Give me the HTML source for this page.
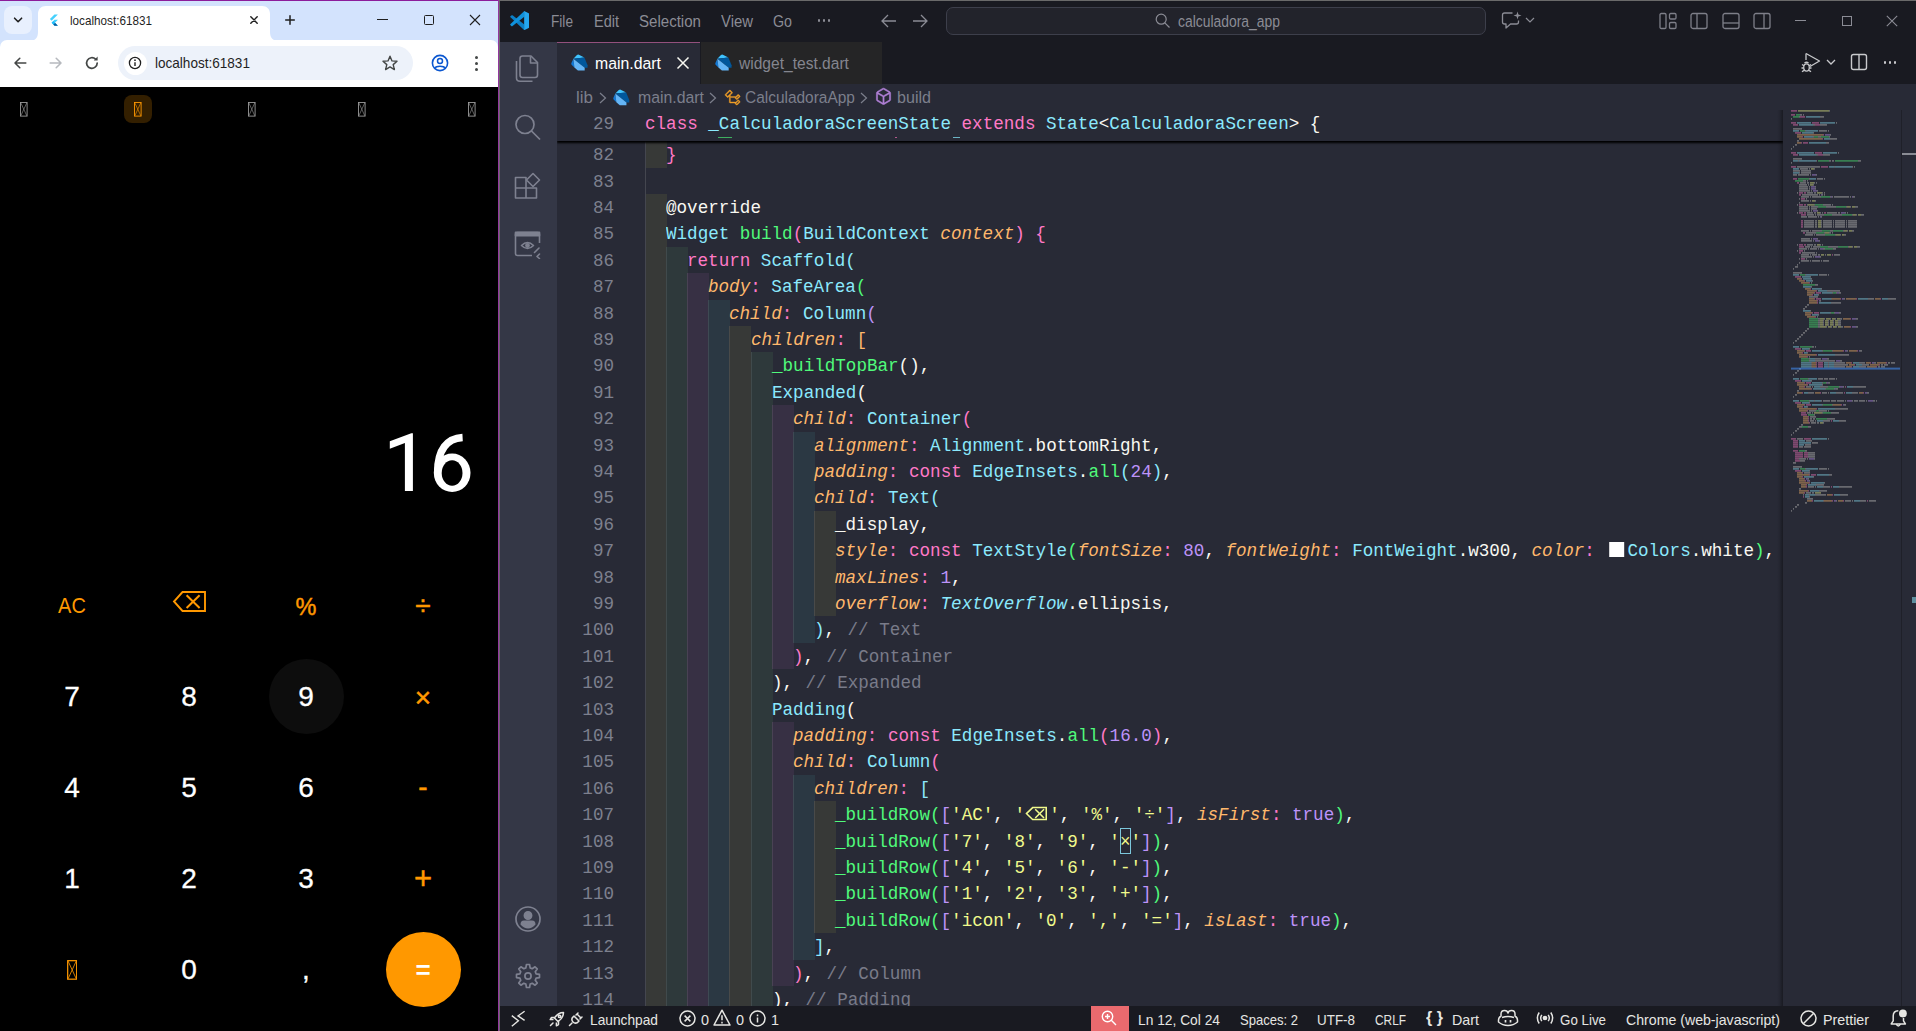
<!DOCTYPE html>
<html><head><meta charset="utf-8"><title>calculadora</title>
<style>
html,body{margin:0;padding:0;}
body{width:1916px;height:1031px;position:relative;overflow:hidden;background:#282a36;font-family:"Liberation Sans",sans-serif;}
div,svg{box-sizing:border-box;}
.a{position:absolute;}
.cl{position:absolute;left:0;height:26.4px;line-height:26.4px;font-family:"Liberation Mono",monospace;font-size:18.8px;white-space:pre;color:#f8f8f2;transform:scaleX(0.93617);transform-origin:0 50%;}
.ln{position:absolute;height:26.4px;line-height:26.4px;font-family:"Liberation Mono",monospace;font-size:18.8px;transform:scaleX(0.93617);transform-origin:100% 50%;color:#7d808e;text-align:right;width:60px;}
.k{color:#ff79c6}.t{color:#8be9fd}.ti{color:#8be9fd;font-style:italic}.f{color:#50fa7b}.p{color:#ffb86c;font-style:italic}
.n{color:#bd93f9}.s{color:#f1fa8c}.w{color:#f8f8f2}.c{color:#797b89;margin-left:2px}
.b1{color:#f8f8f2}.b2{color:#ff79c6}.b3{color:#8be9fd}.b4{color:#50fa7b}.b5{color:#bd93f9}.b6{color:#ffb86c}

</style></head>
<body>
<div class="a" style="left:0;top:0;width:500px;height:1031px;background:#000;"></div><div class="a" style="left:0;top:0;width:499px;height:48px;background:#d3e3fd;"></div><div class="a" style="left:0;top:40px;width:498px;height:47px;background:#ffffff;border-radius:7px 7px 0 0;"></div><div class="a" style="left:4px;top:6px;width:28px;height:28px;border-radius:8px;background:#e8f0fe;"></div><svg class="a" style="left:11px;top:14px" width="14" height="12" viewBox="0 0 14 12"><path d="M3.6 4.2 L7.1 7.7 L10.6 4.2" fill="none" stroke="#1f1f1f" stroke-width="1.6" stroke-linecap="round" stroke-linejoin="round"/></svg><svg class="a" style="left:29px;top:6px" width="252" height="35" viewBox="0 0 252 35"><path d="M0 35 C6 35 9 32 9 26 L9 8 C9 3 12 0 17 0 L233 0 C238 0 241 3 241 8 L241 26 C241 32 244 35 250 35 Z" fill="#ffffff"/></svg><svg class="a" style="left:47.5px;top:13.5px" width="11" height="12.6" viewBox="0 0 14 16"><path d="M8.2 0.5 L12.6 0.5 L4.6 8.5 L2.4 6.3 Z" fill="#45d1fd"/><path d="M8.2 7.4 L12.6 7.4 L8.9 11.1 L12.6 14.8 L8.2 14.8 L4.6 11.1 Z" fill="#45d1fd"/><path d="M8.9 11.1 L12.6 14.8 L8.2 14.8 L6.7 13.3 Z" fill="#075b9d"/><path d="M4.6 11.1 L6.8 8.9 L8.9 11.1 L6.8 13.3 Z" fill="#1fbcfd"/></svg><div style="position:absolute;left:70px;top:11.00px;height:20px;line-height:20px;font-family:'Liberation Sans',sans-serif;font-size:12.84px;font-weight:400;color:#1f1f1f;white-space:pre;transform:scaleX(0.9116);transform-origin:0 50%;">localhost:61831</div><svg class="a" style="left:248px;top:14px" width="12" height="12" viewBox="0 0 12 12"><path d="M2.8 2.8 L9.2 9.2 M9.2 2.8 L2.8 9.2" stroke="#1f1f1f" stroke-width="1.45" stroke-linecap="round"/></svg><svg class="a" style="left:283px;top:13px" width="14" height="14" viewBox="0 0 14 14"><path d="M7 2.7 V11.3 M2.7 7 H11.3" stroke="#1f1f1f" stroke-width="1.5" stroke-linecap="round"/></svg><div class="a" style="left:377px;top:19px;width:11px;height:1px;background:#1f1f1f;"></div><div class="a" style="left:424px;top:15px;width:10px;height:10px;border:1px solid #1f1f1f;border-radius:1.5px;"></div><svg class="a" style="left:469px;top:14px" width="12" height="12" viewBox="0 0 12 12"><path d="M1 1 L11 11 M11 1 L1 11" stroke="#1f1f1f" stroke-width="1.1"/></svg><svg class="a" style="left:12px;top:55px" width="16" height="16" viewBox="0 0 16 16"><path d="M13.8 8 H3.2 M7.8 3.2 L3 8 L7.8 12.8" fill="none" stroke="#444746" stroke-width="1.55" stroke-linecap="round" stroke-linejoin="round"/></svg><svg class="a" style="left:48px;top:55px" width="16" height="16" viewBox="0 0 16 16"><path d="M2.2 8 H12.8 M8.2 3.2 L13 8 L8.2 12.8" fill="none" stroke="#b6b9be" stroke-width="1.55" stroke-linecap="round" stroke-linejoin="round"/></svg><svg class="a" style="left:84px;top:55px" width="16" height="16" viewBox="0 0 16 16"><path d="M13.2 8 A5.3 5.3 0 1 1 11.6 4.2" fill="none" stroke="#444746" stroke-width="1.7" stroke-linecap="round"/><path d="M13.6 1.6 V5.4 H9.8 Z" fill="#444746"/></svg><div class="a" style="left:118px;top:46px;width:295px;height:34px;border-radius:17px;background:#edf2fa;"></div><div class="a" style="left:123.5px;top:51.5px;width:23px;height:23px;border-radius:12px;background:#ffffff;"></div><svg class="a" style="left:128px;top:56px" width="14" height="14" viewBox="0 0 14 14"><circle cx="7" cy="7" r="5.6" fill="none" stroke="#1f1f1f" stroke-width="1.3"/><path d="M7 6.3 V10" stroke="#1f1f1f" stroke-width="1.4"/><circle cx="7" cy="4.2" r="0.85" fill="#1f1f1f"/></svg><div style="position:absolute;left:155px;top:52.65px;height:20px;line-height:20px;font-family:'Liberation Sans',sans-serif;font-size:14.98px;font-weight:400;color:#1f1f1f;white-space:pre;transform:scaleX(0.9053);transform-origin:0 50%;">localhost:61831</div><svg class="a" style="left:381px;top:54px" width="18" height="18" viewBox="0 0 18 18"><path d="M9 2.2 L11 6.9 L16 7.3 L12.2 10.6 L13.4 15.6 L9 12.9 L4.6 15.6 L5.8 10.6 L2 7.3 L7 6.9 Z" fill="none" stroke="#444746" stroke-width="1.4" stroke-linejoin="round"/></svg><svg class="a" style="left:430px;top:53px" width="20" height="20" viewBox="0 0 20 20"><circle cx="10" cy="10" r="7.6" fill="none" stroke="#0b57d0" stroke-width="1.6"/><circle cx="10" cy="8" r="2.5" fill="none" stroke="#0b57d0" stroke-width="1.5"/><path d="M4.8 15.2 C6.2 12.6 13.8 12.6 15.2 15.2" fill="none" stroke="#0b57d0" stroke-width="1.5"/></svg><div class="a" style="left:474.5px;top:55.5px;width:3px;height:3px;border-radius:2px;background:#444746;"></div><div class="a" style="left:474.5px;top:61.5px;width:3px;height:3px;border-radius:2px;background:#444746;"></div><div class="a" style="left:474.5px;top:67.5px;width:3px;height:3px;border-radius:2px;background:#444746;"></div><div class="a" style="left:124px;top:95px;width:28px;height:28px;border-radius:8px;background:#331f00;"></div><svg class="a" style="left:20.0px;top:101.5px" width="8.0" height="15.0" viewBox="0 0 8 15"><rect x="0.5" y="0.5" width="6.6" height="13.6" fill="none" stroke="#9a9a9a" stroke-width="0.9"/><path d="M0.8 0.8 L6.8 13.8 M6.8 0.8 L0.8 13.8" stroke="#9a9a9a" stroke-width="0.6"/></svg><svg class="a" style="left:134.0px;top:101.5px" width="8.0" height="15.0" viewBox="0 0 8 15"><rect x="0.5" y="0.5" width="6.6" height="13.6" fill="none" stroke="#ff9800" stroke-width="0.9"/><path d="M0.8 0.8 L6.8 13.8 M6.8 0.8 L0.8 13.8" stroke="#ff9800" stroke-width="0.6"/></svg><svg class="a" style="left:248.0px;top:101.5px" width="8.0" height="15.0" viewBox="0 0 8 15"><rect x="0.5" y="0.5" width="6.6" height="13.6" fill="none" stroke="#9a9a9a" stroke-width="0.9"/><path d="M0.8 0.8 L6.8 13.8 M6.8 0.8 L0.8 13.8" stroke="#9a9a9a" stroke-width="0.6"/></svg><svg class="a" style="left:358.0px;top:101.5px" width="8.0" height="15.0" viewBox="0 0 8 15"><rect x="0.5" y="0.5" width="6.6" height="13.6" fill="none" stroke="#9a9a9a" stroke-width="0.9"/><path d="M0.8 0.8 L6.8 13.8 M6.8 0.8 L0.8 13.8" stroke="#9a9a9a" stroke-width="0.6"/></svg><svg class="a" style="left:468.0px;top:101.5px" width="8.0" height="15.0" viewBox="0 0 8 15"><rect x="0.5" y="0.5" width="6.6" height="13.6" fill="none" stroke="#9a9a9a" stroke-width="0.9"/><path d="M0.8 0.8 L6.8 13.8 M6.8 0.8 L0.8 13.8" stroke="#9a9a9a" stroke-width="0.6"/></svg><svg class="a" style="left:380px;top:425px" width="100" height="75" viewBox="380 425 100 75"><path d="M412.9 433.3 L412.9 491 L404.9 491 L404.9 442.9 L389.8 448.7 L389.8 441.3 L411.3 433.3 Z" fill="#fff"/><ellipse cx="452.15" cy="472.8" rx="18.35" ry="19.25" fill="#fff"/><path d="M462.6 437.5 C447.3 438.3 437.7 449.5 437.7 472" fill="none" stroke="#fff" stroke-width="7.5"/><ellipse cx="452.1" cy="473" rx="10.4" ry="12.7" fill="#000"/></svg><div class="a" style="left:268.5px;top:658.5px;width:75px;height:75px;border-radius:50%;background:#0d0d0d;"></div><div class="a" style="left:385.5px;top:931.5px;width:75px;height:75px;border-radius:50%;background:#ff9800;"></div><div class="a" style="left:32px;top:586px;width:80px;height:40px;line-height:40px;text-align:center;font-size:21.5px;font-weight:400;color:#ff9800;transform:scaleX(0.93);">AC</div><svg class="a" style="left:172px;top:590px" width="36" height="24" viewBox="0 0 36 24"><path d="M10.5 2 H33 V21 H10.5 L2 11.5 Z" fill="none" stroke="#ff9800" stroke-width="1.9" stroke-linejoin="miter"/><path d="M14.6 5.2 L27.6 18 M27.6 5.2 L14.6 18" stroke="#ff9800" stroke-width="2"/></svg><div class="a" style="left:266px;top:586.5px;width:80px;height:40px;line-height:40px;text-align:center;font-size:23.5px;font-weight:400;color:#ff9800;-webkit-text-stroke:0.45px #ff9800;">%</div><div class="a" style="left:383px;top:586px;width:80px;height:40px;line-height:40px;text-align:center;font-size:28px;font-weight:400;color:#ff9800;-webkit-text-stroke:0.45px #ff9800;">&#247;</div><div class="a" style="left:32px;top:677px;width:80px;height:40px;line-height:40px;text-align:center;font-size:28px;font-weight:400;color:#fff;-webkit-text-stroke:0.3px #fff;">7</div><div class="a" style="left:149px;top:677px;width:80px;height:40px;line-height:40px;text-align:center;font-size:28px;font-weight:400;color:#fff;-webkit-text-stroke:0.3px #fff;">8</div><div class="a" style="left:266px;top:677px;width:80px;height:40px;line-height:40px;text-align:center;font-size:28px;font-weight:400;color:#fff;-webkit-text-stroke:0.3px #fff;">9</div><div class="a" style="left:383px;top:678px;width:80px;height:40px;line-height:40px;text-align:center;font-size:28px;font-weight:400;color:#ff9800;-webkit-text-stroke:0.45px #ff9800;">&#215;</div><div class="a" style="left:32px;top:768px;width:80px;height:40px;line-height:40px;text-align:center;font-size:28px;font-weight:400;color:#fff;-webkit-text-stroke:0.3px #fff;">4</div><div class="a" style="left:149px;top:768px;width:80px;height:40px;line-height:40px;text-align:center;font-size:28px;font-weight:400;color:#fff;-webkit-text-stroke:0.3px #fff;">5</div><div class="a" style="left:266px;top:768px;width:80px;height:40px;line-height:40px;text-align:center;font-size:28px;font-weight:400;color:#fff;-webkit-text-stroke:0.3px #fff;">6</div><div class="a" style="left:383px;top:767px;width:80px;height:40px;line-height:40px;text-align:center;font-size:28px;font-weight:400;color:#ff9800;-webkit-text-stroke:0.45px #ff9800;">-</div><div class="a" style="left:32px;top:859px;width:80px;height:40px;line-height:40px;text-align:center;font-size:28px;font-weight:400;color:#fff;-webkit-text-stroke:0.3px #fff;">1</div><div class="a" style="left:149px;top:859px;width:80px;height:40px;line-height:40px;text-align:center;font-size:28px;font-weight:400;color:#fff;-webkit-text-stroke:0.3px #fff;">2</div><div class="a" style="left:266px;top:859px;width:80px;height:40px;line-height:40px;text-align:center;font-size:28px;font-weight:400;color:#fff;-webkit-text-stroke:0.3px #fff;">3</div><div class="a" style="left:383px;top:859px;width:80px;height:40px;line-height:40px;text-align:center;font-size:31px;font-weight:400;color:#ff9800;-webkit-text-stroke:0.45px #ff9800;">+</div><svg class="a" style="left:66.56px;top:959.8px" width="10.88" height="20.400000000000002" viewBox="0 0 8 15"><rect x="0.5" y="0.5" width="6.6" height="13.6" fill="none" stroke="#ff9800" stroke-width="0.9"/><path d="M0.8 0.8 L6.8 13.8 M6.8 0.8 L0.8 13.8" stroke="#ff9800" stroke-width="0.6"/></svg><div class="a" style="left:149px;top:950px;width:80px;height:40px;line-height:40px;text-align:center;font-size:28px;font-weight:400;color:#fff;-webkit-text-stroke:0.3px #fff;">0</div><div class="a" style="left:266px;top:950px;width:80px;height:40px;line-height:40px;text-align:center;font-size:28px;font-weight:400;color:#fff;-webkit-text-stroke:0.3px #fff;">,</div><div class="a" style="left:383px;top:949.5px;width:80px;height:40px;line-height:40px;text-align:center;font-size:26px;font-weight:700;color:#fff;">=</div><div class="a" style="left:0;top:0;width:499px;height:1px;background:#8c1d9b;"></div><div class="a" style="left:498px;top:0;width:1px;height:1031px;background:#93379f;"></div><div class="a" style="left:499px;top:0;width:1px;height:1031px;background:#6a6b6a;"></div><div class="a" style="left:500px;top:0;width:1416px;height:42px;background:#191a21;"></div><div class="a" style="left:499px;top:0;width:1417px;height:1px;background:#6a6a6a;"></div><div class="a" style="left:557px;top:42px;width:1359px;height:42px;background:#191a21;"></div><div class="a" style="left:500px;top:42px;width:57px;height:964px;background:#343746;"></div><div class="a" style="left:557px;top:84px;width:1359px;height:922px;background:#282a36;"></div><div class="a" style="left:500px;top:1006px;width:1416px;height:25px;background:#191a21;"></div><svg class="a" style="left:509.8px;top:10.9px" width="19.4" height="19.3" viewBox="0 0 20 19.8"><path d="M14.8 19.8 L14.8 13.9 L2.6 4.4 Q1.9 4 1.3 4.5 L0.4 5.3 Q-0.1 5.9 0.5 6.5 Z" fill="#0b7fc6"/><path d="M14.8 0 L14.8 5.9 L2.6 15.4 Q1.9 15.8 1.3 15.3 L0.4 14.5 Q-0.1 13.9 0.5 13.3 Z" fill="#1092dc"/><path d="M14.6 0 L19.3 2.3 Q20 2.7 20 3.5 L20 16.3 Q20 17.1 19.3 17.5 L14.6 19.8 Z" fill="#25a7ef"/></svg><div style="position:absolute;left:551px;top:11.32px;height:20px;line-height:20px;font-family:'Liberation Sans',sans-serif;font-size:16.26px;font-weight:400;color:#8b8c95;white-space:pre;transform:scaleX(0.8395);transform-origin:0 50%;">File</div><div style="position:absolute;left:594px;top:11.32px;height:20px;line-height:20px;font-family:'Liberation Sans',sans-serif;font-size:16.26px;font-weight:400;color:#8b8c95;white-space:pre;transform:scaleX(0.8920);transform-origin:0 50%;">Edit</div><div style="position:absolute;left:639px;top:11.32px;height:20px;line-height:20px;font-family:'Liberation Sans',sans-serif;font-size:16.26px;font-weight:400;color:#8b8c95;white-space:pre;transform:scaleX(0.9267);transform-origin:0 50%;">Selection</div><div style="position:absolute;left:721px;top:11.32px;height:20px;line-height:20px;font-family:'Liberation Sans',sans-serif;font-size:16.26px;font-weight:400;color:#8b8c95;white-space:pre;transform:scaleX(0.9154);transform-origin:0 50%;">View</div><div style="position:absolute;left:773px;top:11.32px;height:20px;line-height:20px;font-family:'Liberation Sans',sans-serif;font-size:16.26px;font-weight:400;color:#8b8c95;white-space:pre;transform:scaleX(0.8757);transform-origin:0 50%;">Go</div><div class="a" style="left:817.5px;top:19.3px;width:2.9px;height:2.9px;border-radius:2px;background:#8b8c95;"></div><div class="a" style="left:822.5px;top:19.3px;width:2.9px;height:2.9px;border-radius:2px;background:#8b8c95;"></div><div class="a" style="left:827.5px;top:19.3px;width:2.9px;height:2.9px;border-radius:2px;background:#8b8c95;"></div><svg class="a" style="left:880px;top:12px" width="18" height="18" viewBox="0 0 18 18"><path d="M16 9 H2.5 M8 3 L2 9 L8 15" fill="none" stroke="#8b8c95" stroke-width="1.3"/></svg><svg class="a" style="left:911px;top:12px" width="18" height="18" viewBox="0 0 18 18"><path d="M2 9 H15.5 M10 3 L16 9 L10 15" fill="none" stroke="#8b8c95" stroke-width="1.3"/></svg><div class="a" style="left:946px;top:7px;width:540px;height:28px;border-radius:7px;background:#22232b;border:1px solid #3d3f4b;"></div><svg class="a" style="left:1154px;top:12px" width="17" height="17" viewBox="0 0 17 17"><circle cx="7.2" cy="7.2" r="5" fill="none" stroke="#8b8c95" stroke-width="1.2"/><path d="M10.8 10.8 L15.5 15.5" stroke="#8b8c95" stroke-width="1.2"/></svg><div style="position:absolute;left:1178px;top:11.63px;height:20px;line-height:20px;font-family:'Liberation Sans',sans-serif;font-size:15.62px;font-weight:400;color:#8b8c95;white-space:pre;transform:scaleX(0.8897);transform-origin:0 50%;">calculadora_app</div><svg class="a" style="left:1500px;top:10px" width="24" height="22" viewBox="0 0 24 22"><path d="M12.5 3 H4.5 Q2.5 3 2.5 5 V12 Q2.5 14 4.5 14 H6 V18 L10.5 14 H16.5 Q18.5 14 18.5 12 V10.5" fill="none" stroke="#8b8c95" stroke-width="1.3" stroke-linejoin="round"/><path d="M17.5 1.5 L18.4 4.6 L21.5 5.5 L18.4 6.4 L17.5 9.5 L16.6 6.4 L13.5 5.5 L16.6 4.6 Z" fill="#8b8c95"/></svg><svg class="a" style="left:1524px;top:15px" width="12" height="10" viewBox="0 0 12 10"><path d="M2 3 L6 7 L10 3" fill="none" stroke="#8b8c95" stroke-width="1.2"/></svg><svg class="a" style="left:1658.2px;top:11px" width="20" height="20" viewBox="0 0 20 20" fill="none" stroke="#7e7f89" stroke-width="1.3"><rect x="2" y="2.5" width="6" height="15" rx="1.2"/><rect x="11.5" y="2.5" width="6.5" height="5.5" rx="1.2"/><rect x="11.5" y="11.5" width="6.5" height="6" rx="1.2"/></svg><svg class="a" style="left:1689.2px;top:11px" width="20" height="20" viewBox="0 0 20 20" fill="none" stroke="#7e7f89" stroke-width="1.3"><rect x="2" y="2.5" width="16" height="15" rx="2"/><path d="M8 2.5 V17.5"/></svg><svg class="a" style="left:1721px;top:11px" width="20" height="20" viewBox="0 0 20 20" fill="none" stroke="#7e7f89" stroke-width="1.3"><rect x="2" y="2.5" width="16" height="15" rx="2"/><path d="M2 12 H18"/></svg><svg class="a" style="left:1752px;top:11px" width="20" height="20" viewBox="0 0 20 20" fill="none" stroke="#7e7f89" stroke-width="1.3"><rect x="2" y="2.5" width="16" height="15" rx="2"/><path d="M12 2.5 V17.5"/></svg><div class="a" style="left:1795px;top:20px;width:11px;height:1px;background:#8b8c95;"></div><div class="a" style="left:1842px;top:16px;width:10px;height:10px;border:1px solid #8b8c95;"></div><svg class="a" style="left:1886px;top:15px" width="12" height="12" viewBox="0 0 12 12"><path d="M0.8 0.8 L11.2 11.2 M11.2 0.8 L0.8 11.2" stroke="#8b8c95" stroke-width="1.1"/></svg><svg class="a" style="left:512px;top:53px" width="30" height="32" viewBox="0 0 30 32" fill="none" stroke="#7e8190" stroke-width="1.6" stroke-linejoin="round"><path d="M10.5 3 H19 L25.5 9.5 V22 Q25.5 24.5 23 24.5 H10.5 Q8 24.5 8 22 V5.5 Q8 3 10.5 3 Z"/><path d="M18.5 3.3 V10 H25.2"/><path d="M4.5 8 V25 Q4.5 28.3 8 28.3 H20.5"/></svg><svg class="a" style="left:512px;top:112px" width="30" height="30" viewBox="0 0 30 30" fill="none" stroke="#7e8190" stroke-width="1.7"><circle cx="13" cy="12.5" r="9"/><path d="M19.5 19 L28 27.5"/></svg><svg class="a" style="left:512px;top:171px" width="30" height="30" viewBox="0 0 30 30" fill="none" stroke="#7e8190" stroke-width="1.6" stroke-linejoin="round"><path d="M3.5 6.5 H14 V27 H3.5 Z M3.5 17 H24.5 V27 H14"/><path d="M21 2.5 L27.5 9 L21 15.5 L14.5 9 Z"/></svg><svg class="a" style="left:512px;top:229px" width="30" height="30" viewBox="0 0 30 30" fill="none" stroke="#7e8190" stroke-width="1.6" stroke-linejoin="round"><path d="M20 26.5 H5.5 Q3.5 26.5 3.5 24.5 V5.5 Q3.5 3.5 5.5 3.5 H25.5 Q27.5 3.5 27.5 5.5 V14"/><path d="M3.5 3.2 H27.5 V6.8 H3.5 Z" fill="#7e8190"/><path d="M9.5 16.5 Q15.5 10.5 21.5 16.5 Q15.5 22.5 9.5 16.5 Z"/><circle cx="15.5" cy="16.5" r="1.6" fill="#7e8190"/><path d="M27 19 L22.5 23.5 M27.5 25 L25 27.5 L27.5 29.5" stroke-linecap="round"/></svg><svg class="a" style="left:513px;top:903.8px" width="30" height="30" viewBox="0 0 30 30" fill="none" stroke="#7e8190" stroke-width="1.7"><circle cx="15" cy="15" r="12"/><circle cx="15" cy="11.5" r="3.6" fill="#7e8190"/><path d="M7.5 20.5 Q7.5 16.5 11 16.5 H19 Q22.5 16.5 22.5 20.5 Q19 24.5 15 24.5 Q11 24.5 7.5 20.5 Z" fill="#7e8190" stroke="none"/></svg><svg class="a" style="left:513px;top:960.7px" width="30" height="30" viewBox="0 0 30 30" fill="none" stroke="#7e8190" stroke-width="1.7" stroke-linejoin="round"><path d="M26.50 13.46 L26.50 16.54 L23.12 17.15 L22.26 19.22 L24.22 22.04 L22.04 24.22 L19.22 22.26 L17.15 23.12 L16.54 26.50 L13.46 26.50 L12.85 23.12 L10.78 22.26 L7.96 24.22 L5.78 22.04 L7.74 19.22 L6.88 17.15 L3.50 16.54 L3.50 13.46 L6.88 12.85 L7.74 10.78 L5.78 7.96 L7.96 5.78 L10.78 7.74 L12.85 6.88 L13.46 3.50 L16.54 3.50 L17.15 6.88 L19.22 7.74 L22.04 5.78 L24.22 7.96 L22.26 10.78 L23.12 12.85 Z"/><circle cx="15" cy="15" r="3.1"/></svg><div class="a" style="left:557px;top:42px;width:143px;height:42px;background:#282a36;"></div><div class="a" style="left:557px;top:42px;width:143px;height:1px;background:#93507d;"></div><div class="a" style="left:701px;top:42px;width:181px;height:42px;background:#252526;"></div><svg class="a" style="left:570.5px;top:54.2px" width="17" height="17" viewBox="0 0 16 16"><path d="M3.2 12.8 L0.6 10.1 Q0 9.4 0.4 8.5 L2.2 4.4 Z" fill="#1279d6"/><path d="M2.2 4.4 L5.6 1 Q6.4 0.2 7.4 0.6 L12.6 3.3 Z" fill="#40c4ff"/><path d="M2.2 4.4 L12.6 3.3 L15.6 10.5 L15.6 13 L12.9 13 Z" fill="#01579b"/><path d="M2.2 4.4 L12.9 13 L12.9 15.6 L6.5 15.6 L3.2 12.8 Z" fill="#64b5f6"/></svg><div style="position:absolute;left:595px;top:53.32px;height:20px;line-height:20px;font-family:'Liberation Sans',sans-serif;font-size:16.26px;font-weight:400;color:#ffffff;white-space:pre;transform:scaleX(0.9735);transform-origin:0 50%;">main.dart</div><svg class="a" style="left:676px;top:56px" width="14" height="14" viewBox="0 0 14 14"><path d="M1.5 1.5 L12.5 12.5 M12.5 1.5 L1.5 12.5" stroke="#f8f8f2" stroke-width="1.5"/></svg><svg class="a" style="left:714.5px;top:54.2px" width="17" height="17" viewBox="0 0 16 16"><path d="M3.2 12.8 L0.6 10.1 Q0 9.4 0.4 8.5 L2.2 4.4 Z" fill="#1279d6"/><path d="M2.2 4.4 L5.6 1 Q6.4 0.2 7.4 0.6 L12.6 3.3 Z" fill="#40c4ff"/><path d="M2.2 4.4 L12.6 3.3 L15.6 10.5 L15.6 13 L12.9 13 Z" fill="#01579b"/><path d="M2.2 4.4 L12.9 13 L12.9 15.6 L6.5 15.6 L3.2 12.8 Z" fill="#64b5f6"/></svg><div style="position:absolute;left:739px;top:53.32px;height:20px;line-height:20px;font-family:'Liberation Sans',sans-serif;font-size:16.26px;font-weight:400;color:#84868f;white-space:pre;transform:scaleX(0.9580);transform-origin:0 50%;">widget_test.dart</div><svg class="a" style="left:1798px;top:49.3px" width="26" height="26" viewBox="0 0 26 26" fill="none" stroke="#c8c9cc" stroke-width="1.3" stroke-linejoin="round"><path d="M8 4.5 L21.5 12 L12 17.5"/><path d="M8 4.5 V11"/><ellipse cx="8.5" cy="18.5" rx="2.8" ry="3.6"/><path d="M4 15.5 L6 16.8 M13 15.5 L11 16.8 M3.5 19 H5.7 M11.3 19 H13.5 M4 22.8 L6 21.4 M13 22.8 L11 21.4 M6.5 14 Q8.5 12.5 10.5 14"/></svg><svg class="a" style="left:1825px;top:57.3px" width="12" height="10" viewBox="0 0 12 10"><path d="M2 3 L6 7 L10 3" fill="none" stroke="#c8c9cc" stroke-width="1.3"/></svg><svg class="a" style="left:1848.5px;top:52.3px" width="20" height="20" viewBox="0 0 20 20" fill="none" stroke="#c8c9cc" stroke-width="1.4"><rect x="2.5" y="2.5" width="15" height="15" rx="2"/><path d="M10 2.5 V17.5"/></svg><div class="a" style="left:1883.5px;top:61.3px;width:2.6px;height:2.6px;border-radius:2px;background:#c8c9cc;"></div><div class="a" style="left:1888.5px;top:61.3px;width:2.6px;height:2.6px;border-radius:2px;background:#c8c9cc;"></div><div class="a" style="left:1893.5px;top:61.3px;width:2.6px;height:2.6px;border-radius:2px;background:#c8c9cc;"></div><div style="position:absolute;left:576px;top:87.12px;height:20px;line-height:20px;font-family:'Liberation Sans',sans-serif;font-size:16.26px;font-weight:400;color:#7c7f8c;white-space:pre;transform:scaleX(1.0447);transform-origin:0 50%;">lib</div><svg class="a" style="left:598px;top:90px" width="10" height="16" viewBox="0 0 10 16"><path d="M2 3 L7.5 8 L2 13" fill="none" stroke="#7c7f8c" stroke-width="1.2"/></svg><svg class="a" style="left:613.3px;top:89px" width="16.7" height="16.7" viewBox="0 0 16 16"><path d="M3.2 12.8 L0.6 10.1 Q0 9.4 0.4 8.5 L2.2 4.4 Z" fill="#1279d6"/><path d="M2.2 4.4 L5.6 1 Q6.4 0.2 7.4 0.6 L12.6 3.3 Z" fill="#40c4ff"/><path d="M2.2 4.4 L12.6 3.3 L15.6 10.5 L15.6 13 L12.9 13 Z" fill="#01579b"/><path d="M2.2 4.4 L12.9 13 L12.9 15.6 L6.5 15.6 L3.2 12.8 Z" fill="#64b5f6"/></svg><div style="position:absolute;left:638px;top:87.12px;height:20px;line-height:20px;font-family:'Liberation Sans',sans-serif;font-size:16.26px;font-weight:400;color:#7c7f8c;white-space:pre;transform:scaleX(0.9735);transform-origin:0 50%;">main.dart</div><svg class="a" style="left:708px;top:90px" width="10" height="16" viewBox="0 0 10 16"><path d="M2 3 L7.5 8 L2 13" fill="none" stroke="#7c7f8c" stroke-width="1.2"/></svg><svg class="a" style="left:723.5px;top:88.5px" width="17.5" height="17.5" viewBox="0 0 16 16"><path fill="#ee9d28" stroke="#ee9d28" stroke-width="0.35" d="M11.34 9.71h.71l2.67-2.67v-.71L13.38 5h-.7l-1.82 1.81h-5V5.56l1.86-1.85V3l-2-2H5L1 5v.71l2 2h.71l1.14-1.15v5.79l.5.5H10v.52l1.33 1.34h.71l2.67-2.67v-.71L13.37 10h-.7l-1.86 1.85h-5v-4H10v.48l1.34 1.38zm1.69-3.65l.63.63-2 2-.63-.63 2-2zm0 5l.63.63-2 2-.63-.63 2-2zM3.35 6.65l-1.29-1.3 3.29-3.29 1.3 1.29-3.3 3.3z"/></svg><div style="position:absolute;left:745px;top:87.12px;height:20px;line-height:20px;font-family:'Liberation Sans',sans-serif;font-size:16.26px;font-weight:400;color:#7c7f8c;white-space:pre;transform:scaleX(0.9505);transform-origin:0 50%;">CalculadoraApp</div><svg class="a" style="left:859px;top:90px" width="10" height="16" viewBox="0 0 10 16"><path d="M2 3 L7.5 8 L2 13" fill="none" stroke="#7c7f8c" stroke-width="1.2"/></svg><svg class="a" style="left:873.5px;top:87px" width="19" height="19" viewBox="0 0 16 16"><path fill="#b180d7" stroke="#b180d7" stroke-width="0.45" d="M13.51 4l-5-3h-1l-5 3-.49.86v6l.49.85 5 3h1l5-3 .49-.85v-6L13.51 4zm-6 9.56l-4.5-2.7V5.7l4.5 2.45v5.41zM3.27 4.7l4.74-2.84 4.74 2.84-4.74 2.59L3.27 4.7zm9.74 6.16l-4.5 2.7V8.15l4.5-2.45v5.16z"/></svg><div style="position:absolute;left:897px;top:87.12px;height:20px;line-height:20px;font-family:'Liberation Sans',sans-serif;font-size:16.26px;font-weight:400;color:#7c7f8c;white-space:pre;transform:scaleX(0.9894);transform-origin:0 50%;">build</div><svg class="a" style="left:508px;top:1008px" width="20" height="20" viewBox="508 1008 20 20" fill="none" stroke="#e6e6e3" stroke-width="1.4"><path d="M511.8 1015.6 L518.4 1020.7 L511.8 1026.2"/><path d="M524.6 1011.2 L518 1015.9 L524.6 1020.3"/></svg><svg class="a" style="left:548px;top:1010px" width="18" height="18" viewBox="0 0 18 18" fill="none" stroke="#e6e6e3" stroke-width="1.5" stroke-linejoin="round"><path d="M15.5 2.5 Q10 2.5 6.5 8 L10 11.5 Q15.5 8 15.5 2.5 Z"/><path d="M6.8 7.5 H3.5 L2.2 9.6 L5.5 9.6 M10.5 11.2 V14.5 L8.4 15.8 L8.4 12.5"/><circle cx="11.6" cy="6.4" r="1.2"/><path d="M2.5 15.5 L5 13" stroke-linecap="round"/></svg><svg class="a" style="left:567px;top:1010px" width="18" height="18" viewBox="0 0 18 18" fill="none" stroke="#e6e6e3" stroke-width="1.5" stroke-linejoin="round"><path d="M7 6 L12 11 L10.5 12.5 Q8 14 6 12 Q4 10 5.5 7.5 Z"/><path d="M9 5 L11 3 M13 9 L15 7 M5 13 L2.5 15.5" stroke-linecap="round"/><path d="M10 4 L14 8" /></svg><div style="position:absolute;left:590px;top:1010.14px;height:20px;line-height:20px;font-family:'Liberation Sans',sans-serif;font-size:15.41px;font-weight:400;color:#e6e6e3;white-space:pre;transform:scaleX(0.8917);transform-origin:0 50%;">Launchpad</div><svg class="a" style="left:679px;top:1010px" width="17" height="17" viewBox="0 0 17 17" fill="none" stroke="#e6e6e3" stroke-width="1.5"><circle cx="8.5" cy="8.5" r="7.5"/><path d="M5.6 5.6 L11.4 11.4 M11.4 5.6 L5.6 11.4"/></svg><div style="position:absolute;left:701px;top:1010.14px;height:20px;line-height:20px;font-family:'Liberation Sans',sans-serif;font-size:15.41px;font-weight:400;color:#e6e6e3;white-space:pre;transform:scaleX(0.9346);transform-origin:0 50%;">0</div><svg class="a" style="left:713px;top:1009px" width="18" height="18" viewBox="0 0 18 18" fill="none" stroke="#e6e6e3" stroke-width="1.5" stroke-linejoin="round"><path d="M9 1.2 L17 16 H1 Z"/><path d="M9 6.2 V11.2 M9 12.8 V14.4"/></svg><div style="position:absolute;left:736px;top:1010.14px;height:20px;line-height:20px;font-family:'Liberation Sans',sans-serif;font-size:15.41px;font-weight:400;color:#e6e6e3;white-space:pre;transform:scaleX(0.9346);transform-origin:0 50%;">0</div><svg class="a" style="left:749px;top:1010px" width="17" height="17" viewBox="0 0 17 17" fill="none" stroke="#e6e6e3" stroke-width="1.5"><circle cx="8.5" cy="8.5" r="7.5"/><path d="M8.5 7.5 V12.4 M8.5 4.4 V6.2"/></svg><div style="position:absolute;left:771px;top:1010.14px;height:20px;line-height:20px;font-family:'Liberation Sans',sans-serif;font-size:15.41px;font-weight:400;color:#e6e6e3;white-space:pre;transform:scaleX(0.9346);transform-origin:0 50%;">1</div><div class="a" style="left:1091px;top:1006px;width:38px;height:25px;background:#ea6a6e;"></div><svg class="a" style="left:1100px;top:1009px" width="18" height="18" viewBox="0 0 18 18" fill="none" stroke="#ffffff" stroke-width="1.4"><circle cx="7.5" cy="7.5" r="5.2"/><path d="M11.3 11.3 L16 16 M5 7.5 H10 M7.5 5 V10"/></svg><div style="position:absolute;left:1138px;top:1010.14px;height:20px;line-height:20px;font-family:'Liberation Sans',sans-serif;font-size:15.41px;font-weight:400;color:#e6e6e3;white-space:pre;transform:scaleX(0.8946);transform-origin:0 50%;">Ln 12, Col 24</div><div style="position:absolute;left:1240px;top:1010.14px;height:20px;line-height:20px;font-family:'Liberation Sans',sans-serif;font-size:15.41px;font-weight:400;color:#e6e6e3;white-space:pre;transform:scaleX(0.8464);transform-origin:0 50%;">Spaces: 2</div><div style="position:absolute;left:1317px;top:1010.14px;height:20px;line-height:20px;font-family:'Liberation Sans',sans-serif;font-size:15.41px;font-weight:400;color:#e6e6e3;white-space:pre;transform:scaleX(0.8705);transform-origin:0 50%;">UTF-8</div><div style="position:absolute;left:1375px;top:1010.14px;height:20px;line-height:20px;font-family:'Liberation Sans',sans-serif;font-size:15.41px;font-weight:400;color:#e6e6e3;white-space:pre;transform:scaleX(0.7705);transform-origin:0 50%;">CRLF</div><div style="position:absolute;left:1426px;top:1008.41px;height:20px;line-height:20px;font-family:'Liberation Sans',sans-serif;font-size:16.59px;font-weight:700;color:#e6e6e3;white-space:pre;transform:scaleX(0.9705);transform-origin:0 50%;">{ }</div><div style="position:absolute;left:1452px;top:1010.14px;height:20px;line-height:20px;font-family:'Liberation Sans',sans-serif;font-size:15.41px;font-weight:400;color:#e6e6e3;white-space:pre;transform:scaleX(0.9276);transform-origin:0 50%;">Dart</div><svg class="a" style="left:1497px;top:1008px" width="22" height="20" viewBox="0 0 22 20" fill="none" stroke="#e6e6e3" stroke-width="1.5" stroke-linejoin="round"><path d="M4 6 Q4 2.5 7.5 2.5 Q10.5 2.5 11 5 Q11.5 2.5 14.5 2.5 Q18 2.5 18 6 L18 8 Q20.5 9.5 20.5 12 V14 Q16.5 17.5 11 17.5 Q5.5 17.5 1.5 14 V12 Q1.5 9.5 4 8 Z"/><path d="M5 9.5 Q11 7.5 17 9.5"/><path d="M8.5 12 V14.5 M13.5 12 V14.5" stroke-width="1.7"/></svg><svg class="a" style="left:1535px;top:1009px" width="20" height="18" viewBox="0 0 20 18" fill="none" stroke="#e6e6e3" stroke-width="1.5"><circle cx="10" cy="9" r="1.6" fill="#e6e6e3"/><path d="M6.8 5.8 Q4.6 9 6.8 12.2 M13.2 5.8 Q15.4 9 13.2 12.2 M4.2 3.5 Q0.6 9 4.2 14.5 M15.8 3.5 Q19.4 9 15.8 14.5"/></svg><div style="position:absolute;left:1560px;top:1010.14px;height:20px;line-height:20px;font-family:'Liberation Sans',sans-serif;font-size:15.41px;font-weight:400;color:#e6e6e3;white-space:pre;transform:scaleX(0.8663);transform-origin:0 50%;">Go Live</div><div style="position:absolute;left:1626px;top:1010.14px;height:20px;line-height:20px;font-family:'Liberation Sans',sans-serif;font-size:15.41px;font-weight:400;color:#e6e6e3;white-space:pre;transform:scaleX(0.9177);transform-origin:0 50%;">Chrome (web-javascript)</div><svg class="a" style="left:1800px;top:1010px" width="17" height="17" viewBox="0 0 17 17" fill="none" stroke="#e6e6e3" stroke-width="1.5"><circle cx="8.5" cy="8.5" r="7.5"/><path d="M3.3 13.7 L13.7 3.3"/></svg><div style="position:absolute;left:1823px;top:1010.14px;height:20px;line-height:20px;font-family:'Liberation Sans',sans-serif;font-size:15.41px;font-weight:400;color:#e6e6e3;white-space:pre;transform:scaleX(0.9262);transform-origin:0 50%;">Prettier</div><svg class="a" style="left:1886px;top:1006px" width="30" height="25" viewBox="1886 1006 30 25" fill="none" stroke="#e6e6e3" stroke-width="1.5" stroke-linejoin="round"><path d="M1898.3 1010.7 C1895.2 1010.7 1893.2 1012.9 1893.2 1016 V1020.8 L1891.2 1023.9 H1905.4 L1903.5 1020.8 V1018"/><path d="M1896.2 1024.2 Q1898.3 1027.6 1900.4 1024.2"/><circle cx="1902.9" cy="1013.5" r="3.9" fill="#e6e6e3" stroke="none"/></svg><div class="a" style="left:557px;top:110px;width:1226px;height:896px;overflow:hidden;"><div class="a" style="left:88.00px;top:31.00px;width:22.02px;height:27px;background:#373937;"></div><div class="a" style="left:88.00px;top:31.00px;width:1px;height:27px;background:rgba(255,255,255,0.09);"></div><div class="ln" style="left:-3px;top:32.20px;">82</div><div class="cl" style="left:109.12px;top:32.20px;"><span class="b2">}</span></div><div class="ln" style="left:-3px;top:59.20px;">83</div><div class="cl" style="left:88.00px;top:59.20px;"></div><div class="a" style="left:88.00px;top:84.00px;width:22.02px;height:26px;background:#373937;"></div><div class="a" style="left:88.00px;top:84.00px;width:1px;height:26px;background:rgba(255,255,255,0.09);"></div><div class="ln" style="left:-3px;top:85.20px;">84</div><div class="cl" style="left:109.12px;top:85.20px;">@override</div><div class="a" style="left:88.00px;top:110.00px;width:22.02px;height:27px;background:#373937;"></div><div class="a" style="left:88.00px;top:110.00px;width:1px;height:27px;background:rgba(255,255,255,0.09);"></div><div class="ln" style="left:-3px;top:111.20px;">85</div><div class="cl" style="left:109.12px;top:111.20px;"><span class="t">Widget</span> <span class="f">build</span><span class="b2">(</span><span class="t">BuildContext</span> <span class="p">context</span><span class="b2">)</span> <span class="b2">{</span></div><div class="a" style="left:88.00px;top:137.00px;width:22.02px;height:26px;background:#373937;"></div><div class="a" style="left:109.12px;top:137.00px;width:22.02px;height:26px;background:#2e393b;"></div><div class="a" style="left:88.00px;top:137.00px;width:1px;height:26px;background:rgba(255,255,255,0.09);"></div><div class="a" style="left:109.12px;top:137.00px;width:1px;height:26px;background:rgba(255,255,255,0.09);"></div><div class="ln" style="left:-3px;top:138.20px;">86</div><div class="cl" style="left:130.24px;top:138.20px;"><span class="k">return</span> <span class="t">Scaffold</span><span class="b3">(</span></div><div class="a" style="left:88.00px;top:163.00px;width:22.02px;height:27px;background:#373937;"></div><div class="a" style="left:109.12px;top:163.00px;width:22.02px;height:27px;background:#2e393b;"></div><div class="a" style="left:130.24px;top:163.00px;width:22.02px;height:27px;background:#373044;"></div><div class="a" style="left:88.00px;top:163.00px;width:1px;height:27px;background:rgba(255,255,255,0.09);"></div><div class="a" style="left:109.12px;top:163.00px;width:1px;height:27px;background:rgba(255,255,255,0.09);"></div><div class="a" style="left:130.24px;top:163.00px;width:1px;height:27px;background:rgba(255,255,255,0.09);"></div><div class="ln" style="left:-3px;top:164.20px;">87</div><div class="cl" style="left:151.36px;top:164.20px;"><span class="p">body</span><span class="k">:</span> <span class="t">SafeArea</span><span class="b4">(</span></div><div class="a" style="left:88.00px;top:190.00px;width:22.02px;height:26px;background:#373937;"></div><div class="a" style="left:109.12px;top:190.00px;width:22.02px;height:26px;background:#2e393b;"></div><div class="a" style="left:130.24px;top:190.00px;width:22.02px;height:26px;background:#373044;"></div><div class="a" style="left:151.36px;top:190.00px;width:22.02px;height:26px;background:#2b3843;"></div><div class="a" style="left:88.00px;top:190.00px;width:1px;height:26px;background:rgba(255,255,255,0.09);"></div><div class="a" style="left:109.12px;top:190.00px;width:1px;height:26px;background:rgba(255,255,255,0.09);"></div><div class="a" style="left:130.24px;top:190.00px;width:1px;height:26px;background:rgba(255,255,255,0.09);"></div><div class="a" style="left:151.36px;top:190.00px;width:1px;height:26px;background:rgba(255,255,255,0.09);"></div><div class="ln" style="left:-3px;top:191.20px;">88</div><div class="cl" style="left:172.48px;top:191.20px;"><span class="p">child</span><span class="k">:</span> <span class="t">Column</span><span class="b5">(</span></div><div class="a" style="left:88.00px;top:216.00px;width:22.02px;height:26px;background:#373937;"></div><div class="a" style="left:109.12px;top:216.00px;width:22.02px;height:26px;background:#2e393b;"></div><div class="a" style="left:130.24px;top:216.00px;width:22.02px;height:26px;background:#373044;"></div><div class="a" style="left:151.36px;top:216.00px;width:22.02px;height:26px;background:#2b3843;"></div><div class="a" style="left:172.48px;top:216.00px;width:22.02px;height:26px;background:#373937;"></div><div class="a" style="left:88.00px;top:216.00px;width:1px;height:26px;background:rgba(255,255,255,0.09);"></div><div class="a" style="left:109.12px;top:216.00px;width:1px;height:26px;background:rgba(255,255,255,0.09);"></div><div class="a" style="left:130.24px;top:216.00px;width:1px;height:26px;background:rgba(255,255,255,0.09);"></div><div class="a" style="left:151.36px;top:216.00px;width:1px;height:26px;background:rgba(255,255,255,0.09);"></div><div class="a" style="left:172.48px;top:216.00px;width:1px;height:26px;background:rgba(255,255,255,0.09);"></div><div class="ln" style="left:-3px;top:217.20px;">89</div><div class="cl" style="left:193.60px;top:217.20px;"><span class="p">children</span><span class="k">:</span> <span class="b6">[</span></div><div class="a" style="left:88.00px;top:242.00px;width:22.02px;height:27px;background:#373937;"></div><div class="a" style="left:109.12px;top:242.00px;width:22.02px;height:27px;background:#2e393b;"></div><div class="a" style="left:130.24px;top:242.00px;width:22.02px;height:27px;background:#373044;"></div><div class="a" style="left:151.36px;top:242.00px;width:22.02px;height:27px;background:#2b3843;"></div><div class="a" style="left:172.48px;top:242.00px;width:22.02px;height:27px;background:#373937;"></div><div class="a" style="left:193.60px;top:242.00px;width:22.02px;height:27px;background:#2e393b;"></div><div class="a" style="left:88.00px;top:242.00px;width:1px;height:27px;background:rgba(255,255,255,0.09);"></div><div class="a" style="left:109.12px;top:242.00px;width:1px;height:27px;background:rgba(255,255,255,0.09);"></div><div class="a" style="left:130.24px;top:242.00px;width:1px;height:27px;background:rgba(255,255,255,0.09);"></div><div class="a" style="left:151.36px;top:242.00px;width:1px;height:27px;background:rgba(255,255,255,0.09);"></div><div class="a" style="left:172.48px;top:242.00px;width:1px;height:27px;background:rgba(255,255,255,0.09);"></div><div class="a" style="left:193.60px;top:242.00px;width:1px;height:27px;background:rgba(255,255,255,0.09);"></div><div class="ln" style="left:-3px;top:243.20px;">90</div><div class="cl" style="left:214.72px;top:243.20px;"><span class="f">_buildTopBar</span><span class="b1">()</span>,</div><div class="a" style="left:88.00px;top:269.00px;width:22.02px;height:26px;background:#373937;"></div><div class="a" style="left:109.12px;top:269.00px;width:22.02px;height:26px;background:#2e393b;"></div><div class="a" style="left:130.24px;top:269.00px;width:22.02px;height:26px;background:#373044;"></div><div class="a" style="left:151.36px;top:269.00px;width:22.02px;height:26px;background:#2b3843;"></div><div class="a" style="left:172.48px;top:269.00px;width:22.02px;height:26px;background:#373937;"></div><div class="a" style="left:193.60px;top:269.00px;width:22.02px;height:26px;background:#2e393b;"></div><div class="a" style="left:88.00px;top:269.00px;width:1px;height:26px;background:rgba(255,255,255,0.09);"></div><div class="a" style="left:109.12px;top:269.00px;width:1px;height:26px;background:rgba(255,255,255,0.09);"></div><div class="a" style="left:130.24px;top:269.00px;width:1px;height:26px;background:rgba(255,255,255,0.09);"></div><div class="a" style="left:151.36px;top:269.00px;width:1px;height:26px;background:rgba(255,255,255,0.09);"></div><div class="a" style="left:172.48px;top:269.00px;width:1px;height:26px;background:rgba(255,255,255,0.09);"></div><div class="a" style="left:193.60px;top:269.00px;width:1px;height:26px;background:rgba(255,255,255,0.09);"></div><div class="ln" style="left:-3px;top:270.20px;">91</div><div class="cl" style="left:214.72px;top:270.20px;"><span class="t">Expanded</span><span class="b1">(</span></div><div class="a" style="left:88.00px;top:295.00px;width:22.02px;height:27px;background:#373937;"></div><div class="a" style="left:109.12px;top:295.00px;width:22.02px;height:27px;background:#2e393b;"></div><div class="a" style="left:130.24px;top:295.00px;width:22.02px;height:27px;background:#373044;"></div><div class="a" style="left:151.36px;top:295.00px;width:22.02px;height:27px;background:#2b3843;"></div><div class="a" style="left:172.48px;top:295.00px;width:22.02px;height:27px;background:#373937;"></div><div class="a" style="left:193.60px;top:295.00px;width:22.02px;height:27px;background:#2e393b;"></div><div class="a" style="left:214.72px;top:295.00px;width:22.02px;height:27px;background:#373044;"></div><div class="a" style="left:88.00px;top:295.00px;width:1px;height:27px;background:rgba(255,255,255,0.09);"></div><div class="a" style="left:109.12px;top:295.00px;width:1px;height:27px;background:rgba(255,255,255,0.09);"></div><div class="a" style="left:130.24px;top:295.00px;width:1px;height:27px;background:rgba(255,255,255,0.09);"></div><div class="a" style="left:151.36px;top:295.00px;width:1px;height:27px;background:rgba(255,255,255,0.09);"></div><div class="a" style="left:172.48px;top:295.00px;width:1px;height:27px;background:rgba(255,255,255,0.09);"></div><div class="a" style="left:193.60px;top:295.00px;width:1px;height:27px;background:rgba(255,255,255,0.09);"></div><div class="a" style="left:214.72px;top:295.00px;width:1px;height:27px;background:rgba(255,255,255,0.09);"></div><div class="ln" style="left:-3px;top:296.20px;">92</div><div class="cl" style="left:235.84px;top:296.20px;"><span class="p">child</span><span class="k">:</span> <span class="t">Container</span><span class="b2">(</span></div><div class="a" style="left:88.00px;top:322.00px;width:22.02px;height:26px;background:#373937;"></div><div class="a" style="left:109.12px;top:322.00px;width:22.02px;height:26px;background:#2e393b;"></div><div class="a" style="left:130.24px;top:322.00px;width:22.02px;height:26px;background:#373044;"></div><div class="a" style="left:151.36px;top:322.00px;width:22.02px;height:26px;background:#2b3843;"></div><div class="a" style="left:172.48px;top:322.00px;width:22.02px;height:26px;background:#373937;"></div><div class="a" style="left:193.60px;top:322.00px;width:22.02px;height:26px;background:#2e393b;"></div><div class="a" style="left:214.72px;top:322.00px;width:22.02px;height:26px;background:#373044;"></div><div class="a" style="left:235.84px;top:322.00px;width:22.02px;height:26px;background:#2b3843;"></div><div class="a" style="left:88.00px;top:322.00px;width:1px;height:26px;background:rgba(255,255,255,0.09);"></div><div class="a" style="left:109.12px;top:322.00px;width:1px;height:26px;background:rgba(255,255,255,0.09);"></div><div class="a" style="left:130.24px;top:322.00px;width:1px;height:26px;background:rgba(255,255,255,0.09);"></div><div class="a" style="left:151.36px;top:322.00px;width:1px;height:26px;background:rgba(255,255,255,0.09);"></div><div class="a" style="left:172.48px;top:322.00px;width:1px;height:26px;background:rgba(255,255,255,0.09);"></div><div class="a" style="left:193.60px;top:322.00px;width:1px;height:26px;background:rgba(255,255,255,0.09);"></div><div class="a" style="left:214.72px;top:322.00px;width:1px;height:26px;background:rgba(255,255,255,0.09);"></div><div class="a" style="left:235.84px;top:322.00px;width:1px;height:26px;background:rgba(255,255,255,0.09);"></div><div class="ln" style="left:-3px;top:323.20px;">93</div><div class="cl" style="left:256.96px;top:323.20px;"><span class="p">alignment</span><span class="k">:</span> <span class="t">Alignment</span>.bottomRight,</div><div class="a" style="left:88.00px;top:348.00px;width:22.02px;height:26px;background:#373937;"></div><div class="a" style="left:109.12px;top:348.00px;width:22.02px;height:26px;background:#2e393b;"></div><div class="a" style="left:130.24px;top:348.00px;width:22.02px;height:26px;background:#373044;"></div><div class="a" style="left:151.36px;top:348.00px;width:22.02px;height:26px;background:#2b3843;"></div><div class="a" style="left:172.48px;top:348.00px;width:22.02px;height:26px;background:#373937;"></div><div class="a" style="left:193.60px;top:348.00px;width:22.02px;height:26px;background:#2e393b;"></div><div class="a" style="left:214.72px;top:348.00px;width:22.02px;height:26px;background:#373044;"></div><div class="a" style="left:235.84px;top:348.00px;width:22.02px;height:26px;background:#2b3843;"></div><div class="a" style="left:88.00px;top:348.00px;width:1px;height:26px;background:rgba(255,255,255,0.09);"></div><div class="a" style="left:109.12px;top:348.00px;width:1px;height:26px;background:rgba(255,255,255,0.09);"></div><div class="a" style="left:130.24px;top:348.00px;width:1px;height:26px;background:rgba(255,255,255,0.09);"></div><div class="a" style="left:151.36px;top:348.00px;width:1px;height:26px;background:rgba(255,255,255,0.09);"></div><div class="a" style="left:172.48px;top:348.00px;width:1px;height:26px;background:rgba(255,255,255,0.09);"></div><div class="a" style="left:193.60px;top:348.00px;width:1px;height:26px;background:rgba(255,255,255,0.09);"></div><div class="a" style="left:214.72px;top:348.00px;width:1px;height:26px;background:rgba(255,255,255,0.09);"></div><div class="a" style="left:235.84px;top:348.00px;width:1px;height:26px;background:rgba(255,255,255,0.09);"></div><div class="ln" style="left:-3px;top:349.20px;">94</div><div class="cl" style="left:256.96px;top:349.20px;"><span class="p">padding</span><span class="k">:</span> <span class="k">const</span> <span class="t">EdgeInsets</span>.<span class="f">all</span><span class="b3">(</span><span class="n">24</span><span class="b3">)</span>,</div><div class="a" style="left:88.00px;top:374.00px;width:22.02px;height:27px;background:#373937;"></div><div class="a" style="left:109.12px;top:374.00px;width:22.02px;height:27px;background:#2e393b;"></div><div class="a" style="left:130.24px;top:374.00px;width:22.02px;height:27px;background:#373044;"></div><div class="a" style="left:151.36px;top:374.00px;width:22.02px;height:27px;background:#2b3843;"></div><div class="a" style="left:172.48px;top:374.00px;width:22.02px;height:27px;background:#373937;"></div><div class="a" style="left:193.60px;top:374.00px;width:22.02px;height:27px;background:#2e393b;"></div><div class="a" style="left:214.72px;top:374.00px;width:22.02px;height:27px;background:#373044;"></div><div class="a" style="left:235.84px;top:374.00px;width:22.02px;height:27px;background:#2b3843;"></div><div class="a" style="left:88.00px;top:374.00px;width:1px;height:27px;background:rgba(255,255,255,0.09);"></div><div class="a" style="left:109.12px;top:374.00px;width:1px;height:27px;background:rgba(255,255,255,0.09);"></div><div class="a" style="left:130.24px;top:374.00px;width:1px;height:27px;background:rgba(255,255,255,0.09);"></div><div class="a" style="left:151.36px;top:374.00px;width:1px;height:27px;background:rgba(255,255,255,0.09);"></div><div class="a" style="left:172.48px;top:374.00px;width:1px;height:27px;background:rgba(255,255,255,0.09);"></div><div class="a" style="left:193.60px;top:374.00px;width:1px;height:27px;background:rgba(255,255,255,0.09);"></div><div class="a" style="left:214.72px;top:374.00px;width:1px;height:27px;background:rgba(255,255,255,0.09);"></div><div class="a" style="left:235.84px;top:374.00px;width:1px;height:27px;background:rgba(255,255,255,0.09);"></div><div class="ln" style="left:-3px;top:375.20px;">95</div><div class="cl" style="left:256.96px;top:375.20px;"><span class="p">child</span><span class="k">:</span> <span class="t">Text</span><span class="b3">(</span></div><div class="a" style="left:88.00px;top:401.00px;width:22.02px;height:26px;background:#373937;"></div><div class="a" style="left:109.12px;top:401.00px;width:22.02px;height:26px;background:#2e393b;"></div><div class="a" style="left:130.24px;top:401.00px;width:22.02px;height:26px;background:#373044;"></div><div class="a" style="left:151.36px;top:401.00px;width:22.02px;height:26px;background:#2b3843;"></div><div class="a" style="left:172.48px;top:401.00px;width:22.02px;height:26px;background:#373937;"></div><div class="a" style="left:193.60px;top:401.00px;width:22.02px;height:26px;background:#2e393b;"></div><div class="a" style="left:214.72px;top:401.00px;width:22.02px;height:26px;background:#373044;"></div><div class="a" style="left:235.84px;top:401.00px;width:22.02px;height:26px;background:#2b3843;"></div><div class="a" style="left:256.96px;top:401.00px;width:22.02px;height:26px;background:#373937;"></div><div class="a" style="left:88.00px;top:401.00px;width:1px;height:26px;background:rgba(255,255,255,0.09);"></div><div class="a" style="left:109.12px;top:401.00px;width:1px;height:26px;background:rgba(255,255,255,0.09);"></div><div class="a" style="left:130.24px;top:401.00px;width:1px;height:26px;background:rgba(255,255,255,0.09);"></div><div class="a" style="left:151.36px;top:401.00px;width:1px;height:26px;background:rgba(255,255,255,0.09);"></div><div class="a" style="left:172.48px;top:401.00px;width:1px;height:26px;background:rgba(255,255,255,0.09);"></div><div class="a" style="left:193.60px;top:401.00px;width:1px;height:26px;background:rgba(255,255,255,0.09);"></div><div class="a" style="left:214.72px;top:401.00px;width:1px;height:26px;background:rgba(255,255,255,0.09);"></div><div class="a" style="left:235.84px;top:401.00px;width:1px;height:26px;background:rgba(255,255,255,0.09);"></div><div class="a" style="left:256.96px;top:401.00px;width:1px;height:26px;background:rgba(255,255,255,0.09);"></div><div class="ln" style="left:-3px;top:402.20px;">96</div><div class="cl" style="left:278.08px;top:402.20px;">_display,</div><div class="a" style="left:88.00px;top:427.00px;width:22.02px;height:27px;background:#373937;"></div><div class="a" style="left:109.12px;top:427.00px;width:22.02px;height:27px;background:#2e393b;"></div><div class="a" style="left:130.24px;top:427.00px;width:22.02px;height:27px;background:#373044;"></div><div class="a" style="left:151.36px;top:427.00px;width:22.02px;height:27px;background:#2b3843;"></div><div class="a" style="left:172.48px;top:427.00px;width:22.02px;height:27px;background:#373937;"></div><div class="a" style="left:193.60px;top:427.00px;width:22.02px;height:27px;background:#2e393b;"></div><div class="a" style="left:214.72px;top:427.00px;width:22.02px;height:27px;background:#373044;"></div><div class="a" style="left:235.84px;top:427.00px;width:22.02px;height:27px;background:#2b3843;"></div><div class="a" style="left:256.96px;top:427.00px;width:22.02px;height:27px;background:#373937;"></div><div class="a" style="left:88.00px;top:427.00px;width:1px;height:27px;background:rgba(255,255,255,0.09);"></div><div class="a" style="left:109.12px;top:427.00px;width:1px;height:27px;background:rgba(255,255,255,0.09);"></div><div class="a" style="left:130.24px;top:427.00px;width:1px;height:27px;background:rgba(255,255,255,0.09);"></div><div class="a" style="left:151.36px;top:427.00px;width:1px;height:27px;background:rgba(255,255,255,0.09);"></div><div class="a" style="left:172.48px;top:427.00px;width:1px;height:27px;background:rgba(255,255,255,0.09);"></div><div class="a" style="left:193.60px;top:427.00px;width:1px;height:27px;background:rgba(255,255,255,0.09);"></div><div class="a" style="left:214.72px;top:427.00px;width:1px;height:27px;background:rgba(255,255,255,0.09);"></div><div class="a" style="left:235.84px;top:427.00px;width:1px;height:27px;background:rgba(255,255,255,0.09);"></div><div class="a" style="left:256.96px;top:427.00px;width:1px;height:27px;background:rgba(255,255,255,0.09);"></div><div class="ln" style="left:-3px;top:428.20px;">97</div><div class="cl" style="left:278.08px;top:428.20px;"><span class="p">style</span><span class="k">:</span> <span class="k">const</span> <span class="t">TextStyle</span><span class="b4">(</span><span class="p">fontSize</span><span class="k">:</span> <span class="n">80</span>, <span class="p">fontWeight</span><span class="k">:</span> <span class="t">FontWeight</span>.w300, <span class="p">color</span><span class="k">:</span> <span style="display:inline-block;width:16.02px;height:15px;margin:0 3.2px 0 4.28px;background:#fff;vertical-align:-1.2px;"></span><span class="t">Colors</span>.white<span class="b4">)</span>,</div><div class="a" style="left:88.00px;top:454.00px;width:22.02px;height:26px;background:#373937;"></div><div class="a" style="left:109.12px;top:454.00px;width:22.02px;height:26px;background:#2e393b;"></div><div class="a" style="left:130.24px;top:454.00px;width:22.02px;height:26px;background:#373044;"></div><div class="a" style="left:151.36px;top:454.00px;width:22.02px;height:26px;background:#2b3843;"></div><div class="a" style="left:172.48px;top:454.00px;width:22.02px;height:26px;background:#373937;"></div><div class="a" style="left:193.60px;top:454.00px;width:22.02px;height:26px;background:#2e393b;"></div><div class="a" style="left:214.72px;top:454.00px;width:22.02px;height:26px;background:#373044;"></div><div class="a" style="left:235.84px;top:454.00px;width:22.02px;height:26px;background:#2b3843;"></div><div class="a" style="left:256.96px;top:454.00px;width:22.02px;height:26px;background:#373937;"></div><div class="a" style="left:88.00px;top:454.00px;width:1px;height:26px;background:rgba(255,255,255,0.09);"></div><div class="a" style="left:109.12px;top:454.00px;width:1px;height:26px;background:rgba(255,255,255,0.09);"></div><div class="a" style="left:130.24px;top:454.00px;width:1px;height:26px;background:rgba(255,255,255,0.09);"></div><div class="a" style="left:151.36px;top:454.00px;width:1px;height:26px;background:rgba(255,255,255,0.09);"></div><div class="a" style="left:172.48px;top:454.00px;width:1px;height:26px;background:rgba(255,255,255,0.09);"></div><div class="a" style="left:193.60px;top:454.00px;width:1px;height:26px;background:rgba(255,255,255,0.09);"></div><div class="a" style="left:214.72px;top:454.00px;width:1px;height:26px;background:rgba(255,255,255,0.09);"></div><div class="a" style="left:235.84px;top:454.00px;width:1px;height:26px;background:rgba(255,255,255,0.09);"></div><div class="a" style="left:256.96px;top:454.00px;width:1px;height:26px;background:rgba(255,255,255,0.09);"></div><div class="ln" style="left:-3px;top:455.20px;">98</div><div class="cl" style="left:278.08px;top:455.20px;"><span class="p">maxLines</span><span class="k">:</span> <span class="n">1</span>,</div><div class="a" style="left:88.00px;top:480.00px;width:22.02px;height:26px;background:#373937;"></div><div class="a" style="left:109.12px;top:480.00px;width:22.02px;height:26px;background:#2e393b;"></div><div class="a" style="left:130.24px;top:480.00px;width:22.02px;height:26px;background:#373044;"></div><div class="a" style="left:151.36px;top:480.00px;width:22.02px;height:26px;background:#2b3843;"></div><div class="a" style="left:172.48px;top:480.00px;width:22.02px;height:26px;background:#373937;"></div><div class="a" style="left:193.60px;top:480.00px;width:22.02px;height:26px;background:#2e393b;"></div><div class="a" style="left:214.72px;top:480.00px;width:22.02px;height:26px;background:#373044;"></div><div class="a" style="left:235.84px;top:480.00px;width:22.02px;height:26px;background:#2b3843;"></div><div class="a" style="left:256.96px;top:480.00px;width:22.02px;height:26px;background:#373937;"></div><div class="a" style="left:88.00px;top:480.00px;width:1px;height:26px;background:rgba(255,255,255,0.09);"></div><div class="a" style="left:109.12px;top:480.00px;width:1px;height:26px;background:rgba(255,255,255,0.09);"></div><div class="a" style="left:130.24px;top:480.00px;width:1px;height:26px;background:rgba(255,255,255,0.09);"></div><div class="a" style="left:151.36px;top:480.00px;width:1px;height:26px;background:rgba(255,255,255,0.09);"></div><div class="a" style="left:172.48px;top:480.00px;width:1px;height:26px;background:rgba(255,255,255,0.09);"></div><div class="a" style="left:193.60px;top:480.00px;width:1px;height:26px;background:rgba(255,255,255,0.09);"></div><div class="a" style="left:214.72px;top:480.00px;width:1px;height:26px;background:rgba(255,255,255,0.09);"></div><div class="a" style="left:235.84px;top:480.00px;width:1px;height:26px;background:rgba(255,255,255,0.09);"></div><div class="a" style="left:256.96px;top:480.00px;width:1px;height:26px;background:rgba(255,255,255,0.09);"></div><div class="ln" style="left:-3px;top:481.20px;">99</div><div class="cl" style="left:278.08px;top:481.20px;"><span class="p">overflow</span><span class="k">:</span> <span class="ti">TextOverflow</span>.ellipsis,</div><div class="a" style="left:88.00px;top:506.00px;width:22.02px;height:27px;background:#373937;"></div><div class="a" style="left:109.12px;top:506.00px;width:22.02px;height:27px;background:#2e393b;"></div><div class="a" style="left:130.24px;top:506.00px;width:22.02px;height:27px;background:#373044;"></div><div class="a" style="left:151.36px;top:506.00px;width:22.02px;height:27px;background:#2b3843;"></div><div class="a" style="left:172.48px;top:506.00px;width:22.02px;height:27px;background:#373937;"></div><div class="a" style="left:193.60px;top:506.00px;width:22.02px;height:27px;background:#2e393b;"></div><div class="a" style="left:214.72px;top:506.00px;width:22.02px;height:27px;background:#373044;"></div><div class="a" style="left:235.84px;top:506.00px;width:22.02px;height:27px;background:#2b3843;"></div><div class="a" style="left:88.00px;top:506.00px;width:1px;height:27px;background:rgba(255,255,255,0.09);"></div><div class="a" style="left:109.12px;top:506.00px;width:1px;height:27px;background:rgba(255,255,255,0.09);"></div><div class="a" style="left:130.24px;top:506.00px;width:1px;height:27px;background:rgba(255,255,255,0.09);"></div><div class="a" style="left:151.36px;top:506.00px;width:1px;height:27px;background:rgba(255,255,255,0.09);"></div><div class="a" style="left:172.48px;top:506.00px;width:1px;height:27px;background:rgba(255,255,255,0.09);"></div><div class="a" style="left:193.60px;top:506.00px;width:1px;height:27px;background:rgba(255,255,255,0.09);"></div><div class="a" style="left:214.72px;top:506.00px;width:1px;height:27px;background:rgba(255,255,255,0.09);"></div><div class="a" style="left:235.84px;top:506.00px;width:1px;height:27px;background:rgba(255,255,255,0.09);"></div><div class="ln" style="left:-3px;top:507.20px;">100</div><div class="cl" style="left:256.96px;top:507.20px;"><span class="b3">)</span>,<span class="c"> // Text</span></div><div class="a" style="left:88.00px;top:533.00px;width:22.02px;height:26px;background:#373937;"></div><div class="a" style="left:109.12px;top:533.00px;width:22.02px;height:26px;background:#2e393b;"></div><div class="a" style="left:130.24px;top:533.00px;width:22.02px;height:26px;background:#373044;"></div><div class="a" style="left:151.36px;top:533.00px;width:22.02px;height:26px;background:#2b3843;"></div><div class="a" style="left:172.48px;top:533.00px;width:22.02px;height:26px;background:#373937;"></div><div class="a" style="left:193.60px;top:533.00px;width:22.02px;height:26px;background:#2e393b;"></div><div class="a" style="left:214.72px;top:533.00px;width:22.02px;height:26px;background:#373044;"></div><div class="a" style="left:88.00px;top:533.00px;width:1px;height:26px;background:rgba(255,255,255,0.09);"></div><div class="a" style="left:109.12px;top:533.00px;width:1px;height:26px;background:rgba(255,255,255,0.09);"></div><div class="a" style="left:130.24px;top:533.00px;width:1px;height:26px;background:rgba(255,255,255,0.09);"></div><div class="a" style="left:151.36px;top:533.00px;width:1px;height:26px;background:rgba(255,255,255,0.09);"></div><div class="a" style="left:172.48px;top:533.00px;width:1px;height:26px;background:rgba(255,255,255,0.09);"></div><div class="a" style="left:193.60px;top:533.00px;width:1px;height:26px;background:rgba(255,255,255,0.09);"></div><div class="a" style="left:214.72px;top:533.00px;width:1px;height:26px;background:rgba(255,255,255,0.09);"></div><div class="ln" style="left:-3px;top:534.20px;">101</div><div class="cl" style="left:235.84px;top:534.20px;"><span class="b2">)</span>,<span class="c"> // Container</span></div><div class="a" style="left:88.00px;top:559.00px;width:22.02px;height:27px;background:#373937;"></div><div class="a" style="left:109.12px;top:559.00px;width:22.02px;height:27px;background:#2e393b;"></div><div class="a" style="left:130.24px;top:559.00px;width:22.02px;height:27px;background:#373044;"></div><div class="a" style="left:151.36px;top:559.00px;width:22.02px;height:27px;background:#2b3843;"></div><div class="a" style="left:172.48px;top:559.00px;width:22.02px;height:27px;background:#373937;"></div><div class="a" style="left:193.60px;top:559.00px;width:22.02px;height:27px;background:#2e393b;"></div><div class="a" style="left:88.00px;top:559.00px;width:1px;height:27px;background:rgba(255,255,255,0.09);"></div><div class="a" style="left:109.12px;top:559.00px;width:1px;height:27px;background:rgba(255,255,255,0.09);"></div><div class="a" style="left:130.24px;top:559.00px;width:1px;height:27px;background:rgba(255,255,255,0.09);"></div><div class="a" style="left:151.36px;top:559.00px;width:1px;height:27px;background:rgba(255,255,255,0.09);"></div><div class="a" style="left:172.48px;top:559.00px;width:1px;height:27px;background:rgba(255,255,255,0.09);"></div><div class="a" style="left:193.60px;top:559.00px;width:1px;height:27px;background:rgba(255,255,255,0.09);"></div><div class="ln" style="left:-3px;top:560.20px;">102</div><div class="cl" style="left:214.72px;top:560.20px;"><span class="b1">)</span>,<span class="c"> // Expanded</span></div><div class="a" style="left:88.00px;top:586.00px;width:22.02px;height:26px;background:#373937;"></div><div class="a" style="left:109.12px;top:586.00px;width:22.02px;height:26px;background:#2e393b;"></div><div class="a" style="left:130.24px;top:586.00px;width:22.02px;height:26px;background:#373044;"></div><div class="a" style="left:151.36px;top:586.00px;width:22.02px;height:26px;background:#2b3843;"></div><div class="a" style="left:172.48px;top:586.00px;width:22.02px;height:26px;background:#373937;"></div><div class="a" style="left:193.60px;top:586.00px;width:22.02px;height:26px;background:#2e393b;"></div><div class="a" style="left:88.00px;top:586.00px;width:1px;height:26px;background:rgba(255,255,255,0.09);"></div><div class="a" style="left:109.12px;top:586.00px;width:1px;height:26px;background:rgba(255,255,255,0.09);"></div><div class="a" style="left:130.24px;top:586.00px;width:1px;height:26px;background:rgba(255,255,255,0.09);"></div><div class="a" style="left:151.36px;top:586.00px;width:1px;height:26px;background:rgba(255,255,255,0.09);"></div><div class="a" style="left:172.48px;top:586.00px;width:1px;height:26px;background:rgba(255,255,255,0.09);"></div><div class="a" style="left:193.60px;top:586.00px;width:1px;height:26px;background:rgba(255,255,255,0.09);"></div><div class="ln" style="left:-3px;top:587.20px;">103</div><div class="cl" style="left:214.72px;top:587.20px;"><span class="t">Padding</span><span class="b1">(</span></div><div class="a" style="left:88.00px;top:612.00px;width:22.02px;height:26px;background:#373937;"></div><div class="a" style="left:109.12px;top:612.00px;width:22.02px;height:26px;background:#2e393b;"></div><div class="a" style="left:130.24px;top:612.00px;width:22.02px;height:26px;background:#373044;"></div><div class="a" style="left:151.36px;top:612.00px;width:22.02px;height:26px;background:#2b3843;"></div><div class="a" style="left:172.48px;top:612.00px;width:22.02px;height:26px;background:#373937;"></div><div class="a" style="left:193.60px;top:612.00px;width:22.02px;height:26px;background:#2e393b;"></div><div class="a" style="left:214.72px;top:612.00px;width:22.02px;height:26px;background:#373044;"></div><div class="a" style="left:88.00px;top:612.00px;width:1px;height:26px;background:rgba(255,255,255,0.09);"></div><div class="a" style="left:109.12px;top:612.00px;width:1px;height:26px;background:rgba(255,255,255,0.09);"></div><div class="a" style="left:130.24px;top:612.00px;width:1px;height:26px;background:rgba(255,255,255,0.09);"></div><div class="a" style="left:151.36px;top:612.00px;width:1px;height:26px;background:rgba(255,255,255,0.09);"></div><div class="a" style="left:172.48px;top:612.00px;width:1px;height:26px;background:rgba(255,255,255,0.09);"></div><div class="a" style="left:193.60px;top:612.00px;width:1px;height:26px;background:rgba(255,255,255,0.09);"></div><div class="a" style="left:214.72px;top:612.00px;width:1px;height:26px;background:rgba(255,255,255,0.09);"></div><div class="ln" style="left:-3px;top:613.20px;">104</div><div class="cl" style="left:235.84px;top:613.20px;"><span class="p">padding</span><span class="k">:</span> <span class="k">const</span> <span class="t">EdgeInsets</span>.<span class="f">all</span><span class="b2">(</span><span class="n">16.0</span><span class="b2">)</span>,</div><div class="a" style="left:88.00px;top:638.00px;width:22.02px;height:27px;background:#373937;"></div><div class="a" style="left:109.12px;top:638.00px;width:22.02px;height:27px;background:#2e393b;"></div><div class="a" style="left:130.24px;top:638.00px;width:22.02px;height:27px;background:#373044;"></div><div class="a" style="left:151.36px;top:638.00px;width:22.02px;height:27px;background:#2b3843;"></div><div class="a" style="left:172.48px;top:638.00px;width:22.02px;height:27px;background:#373937;"></div><div class="a" style="left:193.60px;top:638.00px;width:22.02px;height:27px;background:#2e393b;"></div><div class="a" style="left:214.72px;top:638.00px;width:22.02px;height:27px;background:#373044;"></div><div class="a" style="left:88.00px;top:638.00px;width:1px;height:27px;background:rgba(255,255,255,0.09);"></div><div class="a" style="left:109.12px;top:638.00px;width:1px;height:27px;background:rgba(255,255,255,0.09);"></div><div class="a" style="left:130.24px;top:638.00px;width:1px;height:27px;background:rgba(255,255,255,0.09);"></div><div class="a" style="left:151.36px;top:638.00px;width:1px;height:27px;background:rgba(255,255,255,0.09);"></div><div class="a" style="left:172.48px;top:638.00px;width:1px;height:27px;background:rgba(255,255,255,0.09);"></div><div class="a" style="left:193.60px;top:638.00px;width:1px;height:27px;background:rgba(255,255,255,0.09);"></div><div class="a" style="left:214.72px;top:638.00px;width:1px;height:27px;background:rgba(255,255,255,0.09);"></div><div class="ln" style="left:-3px;top:639.20px;">105</div><div class="cl" style="left:235.84px;top:639.20px;"><span class="p">child</span><span class="k">:</span> <span class="t">Column</span><span class="b2">(</span></div><div class="a" style="left:88.00px;top:665.00px;width:22.02px;height:26px;background:#373937;"></div><div class="a" style="left:109.12px;top:665.00px;width:22.02px;height:26px;background:#2e393b;"></div><div class="a" style="left:130.24px;top:665.00px;width:22.02px;height:26px;background:#373044;"></div><div class="a" style="left:151.36px;top:665.00px;width:22.02px;height:26px;background:#2b3843;"></div><div class="a" style="left:172.48px;top:665.00px;width:22.02px;height:26px;background:#373937;"></div><div class="a" style="left:193.60px;top:665.00px;width:22.02px;height:26px;background:#2e393b;"></div><div class="a" style="left:214.72px;top:665.00px;width:22.02px;height:26px;background:#373044;"></div><div class="a" style="left:235.84px;top:665.00px;width:22.02px;height:26px;background:#2b3843;"></div><div class="a" style="left:88.00px;top:665.00px;width:1px;height:26px;background:rgba(255,255,255,0.09);"></div><div class="a" style="left:109.12px;top:665.00px;width:1px;height:26px;background:rgba(255,255,255,0.09);"></div><div class="a" style="left:130.24px;top:665.00px;width:1px;height:26px;background:rgba(255,255,255,0.09);"></div><div class="a" style="left:151.36px;top:665.00px;width:1px;height:26px;background:rgba(255,255,255,0.09);"></div><div class="a" style="left:172.48px;top:665.00px;width:1px;height:26px;background:rgba(255,255,255,0.09);"></div><div class="a" style="left:193.60px;top:665.00px;width:1px;height:26px;background:rgba(255,255,255,0.09);"></div><div class="a" style="left:214.72px;top:665.00px;width:1px;height:26px;background:rgba(255,255,255,0.09);"></div><div class="a" style="left:235.84px;top:665.00px;width:1px;height:26px;background:rgba(255,255,255,0.09);"></div><div class="ln" style="left:-3px;top:666.20px;">106</div><div class="cl" style="left:256.96px;top:666.20px;"><span class="p">children</span><span class="k">:</span> <span class="b3">[</span></div><div class="a" style="left:88.00px;top:691.00px;width:22.02px;height:27px;background:#373937;"></div><div class="a" style="left:109.12px;top:691.00px;width:22.02px;height:27px;background:#2e393b;"></div><div class="a" style="left:130.24px;top:691.00px;width:22.02px;height:27px;background:#373044;"></div><div class="a" style="left:151.36px;top:691.00px;width:22.02px;height:27px;background:#2b3843;"></div><div class="a" style="left:172.48px;top:691.00px;width:22.02px;height:27px;background:#373937;"></div><div class="a" style="left:193.60px;top:691.00px;width:22.02px;height:27px;background:#2e393b;"></div><div class="a" style="left:214.72px;top:691.00px;width:22.02px;height:27px;background:#373044;"></div><div class="a" style="left:235.84px;top:691.00px;width:22.02px;height:27px;background:#2b3843;"></div><div class="a" style="left:256.96px;top:691.00px;width:22.02px;height:27px;background:#373937;"></div><div class="a" style="left:88.00px;top:691.00px;width:1px;height:27px;background:rgba(255,255,255,0.09);"></div><div class="a" style="left:109.12px;top:691.00px;width:1px;height:27px;background:rgba(255,255,255,0.09);"></div><div class="a" style="left:130.24px;top:691.00px;width:1px;height:27px;background:rgba(255,255,255,0.09);"></div><div class="a" style="left:151.36px;top:691.00px;width:1px;height:27px;background:rgba(255,255,255,0.09);"></div><div class="a" style="left:172.48px;top:691.00px;width:1px;height:27px;background:rgba(255,255,255,0.09);"></div><div class="a" style="left:193.60px;top:691.00px;width:1px;height:27px;background:rgba(255,255,255,0.09);"></div><div class="a" style="left:214.72px;top:691.00px;width:1px;height:27px;background:rgba(255,255,255,0.09);"></div><div class="a" style="left:235.84px;top:691.00px;width:1px;height:27px;background:rgba(255,255,255,0.09);"></div><div class="a" style="left:256.96px;top:691.00px;width:1px;height:27px;background:rgba(255,255,255,0.09);"></div><div class="ln" style="left:-3px;top:692.20px;">107</div><div class="cl" style="left:278.08px;top:692.20px;"><span class="f">_buildRow</span><span class="b4">(</span><span class="b5">[</span><span class="s">'AC'</span>, <span class="s">'</span><svg style="display:inline-block;vertical-align:-3px;" width="25.96" height="18" viewBox="0 0 24.3 18" preserveAspectRatio="none"><path d="M7.6 2.6 H21.2 V14.6 H7.6 L1.4 8.6 Z" fill="none" stroke="#f1fa8c" stroke-width="1.5"/><path d="M10.2 4.2 L19 13 M19 4.2 L10.2 13" stroke="#f1fa8c" stroke-width="1.5"/></svg><span class="s">'</span>, <span class="s">'%'</span>, <span class="s">'&#247;'</span><span class="b5">]</span>, <span class="p">isFirst</span><span class="k">:</span> <span class="n">true</span><span class="b4">)</span>,</div><div class="a" style="left:88.00px;top:718.00px;width:22.02px;height:26px;background:#373937;"></div><div class="a" style="left:109.12px;top:718.00px;width:22.02px;height:26px;background:#2e393b;"></div><div class="a" style="left:130.24px;top:718.00px;width:22.02px;height:26px;background:#373044;"></div><div class="a" style="left:151.36px;top:718.00px;width:22.02px;height:26px;background:#2b3843;"></div><div class="a" style="left:172.48px;top:718.00px;width:22.02px;height:26px;background:#373937;"></div><div class="a" style="left:193.60px;top:718.00px;width:22.02px;height:26px;background:#2e393b;"></div><div class="a" style="left:214.72px;top:718.00px;width:22.02px;height:26px;background:#373044;"></div><div class="a" style="left:235.84px;top:718.00px;width:22.02px;height:26px;background:#2b3843;"></div><div class="a" style="left:256.96px;top:718.00px;width:22.02px;height:26px;background:#373937;"></div><div class="a" style="left:88.00px;top:718.00px;width:1px;height:26px;background:rgba(255,255,255,0.09);"></div><div class="a" style="left:109.12px;top:718.00px;width:1px;height:26px;background:rgba(255,255,255,0.09);"></div><div class="a" style="left:130.24px;top:718.00px;width:1px;height:26px;background:rgba(255,255,255,0.09);"></div><div class="a" style="left:151.36px;top:718.00px;width:1px;height:26px;background:rgba(255,255,255,0.09);"></div><div class="a" style="left:172.48px;top:718.00px;width:1px;height:26px;background:rgba(255,255,255,0.09);"></div><div class="a" style="left:193.60px;top:718.00px;width:1px;height:26px;background:rgba(255,255,255,0.09);"></div><div class="a" style="left:214.72px;top:718.00px;width:1px;height:26px;background:rgba(255,255,255,0.09);"></div><div class="a" style="left:235.84px;top:718.00px;width:1px;height:26px;background:rgba(255,255,255,0.09);"></div><div class="a" style="left:256.96px;top:718.00px;width:1px;height:26px;background:rgba(255,255,255,0.09);"></div><div class="ln" style="left:-3px;top:719.20px;">108</div><div class="cl" style="left:278.08px;top:719.20px;"><span class="f">_buildRow</span><span class="b4">(</span><span class="b5">[</span><span class="s">'7'</span>, <span class="s">'8'</span>, <span class="s">'9'</span>, <span class="s">'&#215;'</span><span class="b5">]</span><span class="b4">)</span>,</div><div class="a" style="left:88.00px;top:744.00px;width:22.02px;height:26px;background:#373937;"></div><div class="a" style="left:109.12px;top:744.00px;width:22.02px;height:26px;background:#2e393b;"></div><div class="a" style="left:130.24px;top:744.00px;width:22.02px;height:26px;background:#373044;"></div><div class="a" style="left:151.36px;top:744.00px;width:22.02px;height:26px;background:#2b3843;"></div><div class="a" style="left:172.48px;top:744.00px;width:22.02px;height:26px;background:#373937;"></div><div class="a" style="left:193.60px;top:744.00px;width:22.02px;height:26px;background:#2e393b;"></div><div class="a" style="left:214.72px;top:744.00px;width:22.02px;height:26px;background:#373044;"></div><div class="a" style="left:235.84px;top:744.00px;width:22.02px;height:26px;background:#2b3843;"></div><div class="a" style="left:256.96px;top:744.00px;width:22.02px;height:26px;background:#373937;"></div><div class="a" style="left:88.00px;top:744.00px;width:1px;height:26px;background:rgba(255,255,255,0.09);"></div><div class="a" style="left:109.12px;top:744.00px;width:1px;height:26px;background:rgba(255,255,255,0.09);"></div><div class="a" style="left:130.24px;top:744.00px;width:1px;height:26px;background:rgba(255,255,255,0.09);"></div><div class="a" style="left:151.36px;top:744.00px;width:1px;height:26px;background:rgba(255,255,255,0.09);"></div><div class="a" style="left:172.48px;top:744.00px;width:1px;height:26px;background:rgba(255,255,255,0.09);"></div><div class="a" style="left:193.60px;top:744.00px;width:1px;height:26px;background:rgba(255,255,255,0.09);"></div><div class="a" style="left:214.72px;top:744.00px;width:1px;height:26px;background:rgba(255,255,255,0.09);"></div><div class="a" style="left:235.84px;top:744.00px;width:1px;height:26px;background:rgba(255,255,255,0.09);"></div><div class="a" style="left:256.96px;top:744.00px;width:1px;height:26px;background:rgba(255,255,255,0.09);"></div><div class="ln" style="left:-3px;top:745.20px;">109</div><div class="cl" style="left:278.08px;top:745.20px;"><span class="f">_buildRow</span><span class="b4">(</span><span class="b5">[</span><span class="s">'4'</span>, <span class="s">'5'</span>, <span class="s">'6'</span>, <span class="s">'-'</span><span class="b5">]</span><span class="b4">)</span>,</div><div class="a" style="left:88.00px;top:770.00px;width:22.02px;height:27px;background:#373937;"></div><div class="a" style="left:109.12px;top:770.00px;width:22.02px;height:27px;background:#2e393b;"></div><div class="a" style="left:130.24px;top:770.00px;width:22.02px;height:27px;background:#373044;"></div><div class="a" style="left:151.36px;top:770.00px;width:22.02px;height:27px;background:#2b3843;"></div><div class="a" style="left:172.48px;top:770.00px;width:22.02px;height:27px;background:#373937;"></div><div class="a" style="left:193.60px;top:770.00px;width:22.02px;height:27px;background:#2e393b;"></div><div class="a" style="left:214.72px;top:770.00px;width:22.02px;height:27px;background:#373044;"></div><div class="a" style="left:235.84px;top:770.00px;width:22.02px;height:27px;background:#2b3843;"></div><div class="a" style="left:256.96px;top:770.00px;width:22.02px;height:27px;background:#373937;"></div><div class="a" style="left:88.00px;top:770.00px;width:1px;height:27px;background:rgba(255,255,255,0.09);"></div><div class="a" style="left:109.12px;top:770.00px;width:1px;height:27px;background:rgba(255,255,255,0.09);"></div><div class="a" style="left:130.24px;top:770.00px;width:1px;height:27px;background:rgba(255,255,255,0.09);"></div><div class="a" style="left:151.36px;top:770.00px;width:1px;height:27px;background:rgba(255,255,255,0.09);"></div><div class="a" style="left:172.48px;top:770.00px;width:1px;height:27px;background:rgba(255,255,255,0.09);"></div><div class="a" style="left:193.60px;top:770.00px;width:1px;height:27px;background:rgba(255,255,255,0.09);"></div><div class="a" style="left:214.72px;top:770.00px;width:1px;height:27px;background:rgba(255,255,255,0.09);"></div><div class="a" style="left:235.84px;top:770.00px;width:1px;height:27px;background:rgba(255,255,255,0.09);"></div><div class="a" style="left:256.96px;top:770.00px;width:1px;height:27px;background:rgba(255,255,255,0.09);"></div><div class="ln" style="left:-3px;top:771.20px;">110</div><div class="cl" style="left:278.08px;top:771.20px;"><span class="f">_buildRow</span><span class="b4">(</span><span class="b5">[</span><span class="s">'1'</span>, <span class="s">'2'</span>, <span class="s">'3'</span>, <span class="s">'+'</span><span class="b5">]</span><span class="b4">)</span>,</div><div class="a" style="left:88.00px;top:797.00px;width:22.02px;height:26px;background:#373937;"></div><div class="a" style="left:109.12px;top:797.00px;width:22.02px;height:26px;background:#2e393b;"></div><div class="a" style="left:130.24px;top:797.00px;width:22.02px;height:26px;background:#373044;"></div><div class="a" style="left:151.36px;top:797.00px;width:22.02px;height:26px;background:#2b3843;"></div><div class="a" style="left:172.48px;top:797.00px;width:22.02px;height:26px;background:#373937;"></div><div class="a" style="left:193.60px;top:797.00px;width:22.02px;height:26px;background:#2e393b;"></div><div class="a" style="left:214.72px;top:797.00px;width:22.02px;height:26px;background:#373044;"></div><div class="a" style="left:235.84px;top:797.00px;width:22.02px;height:26px;background:#2b3843;"></div><div class="a" style="left:256.96px;top:797.00px;width:22.02px;height:26px;background:#373937;"></div><div class="a" style="left:88.00px;top:797.00px;width:1px;height:26px;background:rgba(255,255,255,0.09);"></div><div class="a" style="left:109.12px;top:797.00px;width:1px;height:26px;background:rgba(255,255,255,0.09);"></div><div class="a" style="left:130.24px;top:797.00px;width:1px;height:26px;background:rgba(255,255,255,0.09);"></div><div class="a" style="left:151.36px;top:797.00px;width:1px;height:26px;background:rgba(255,255,255,0.09);"></div><div class="a" style="left:172.48px;top:797.00px;width:1px;height:26px;background:rgba(255,255,255,0.09);"></div><div class="a" style="left:193.60px;top:797.00px;width:1px;height:26px;background:rgba(255,255,255,0.09);"></div><div class="a" style="left:214.72px;top:797.00px;width:1px;height:26px;background:rgba(255,255,255,0.09);"></div><div class="a" style="left:235.84px;top:797.00px;width:1px;height:26px;background:rgba(255,255,255,0.09);"></div><div class="a" style="left:256.96px;top:797.00px;width:1px;height:26px;background:rgba(255,255,255,0.09);"></div><div class="ln" style="left:-3px;top:798.20px;">111</div><div class="cl" style="left:278.08px;top:798.20px;"><span class="f">_buildRow</span><span class="b4">(</span><span class="b5">[</span><span class="s">'icon'</span>, <span class="s">'0'</span>, <span class="s">','</span>, <span class="s">'='</span><span class="b5">]</span>, <span class="p">isLast</span><span class="k">:</span> <span class="n">true</span><span class="b4">)</span>,</div><div class="a" style="left:88.00px;top:823.00px;width:22.02px;height:27px;background:#373937;"></div><div class="a" style="left:109.12px;top:823.00px;width:22.02px;height:27px;background:#2e393b;"></div><div class="a" style="left:130.24px;top:823.00px;width:22.02px;height:27px;background:#373044;"></div><div class="a" style="left:151.36px;top:823.00px;width:22.02px;height:27px;background:#2b3843;"></div><div class="a" style="left:172.48px;top:823.00px;width:22.02px;height:27px;background:#373937;"></div><div class="a" style="left:193.60px;top:823.00px;width:22.02px;height:27px;background:#2e393b;"></div><div class="a" style="left:214.72px;top:823.00px;width:22.02px;height:27px;background:#373044;"></div><div class="a" style="left:235.84px;top:823.00px;width:22.02px;height:27px;background:#2b3843;"></div><div class="a" style="left:88.00px;top:823.00px;width:1px;height:27px;background:rgba(255,255,255,0.09);"></div><div class="a" style="left:109.12px;top:823.00px;width:1px;height:27px;background:rgba(255,255,255,0.09);"></div><div class="a" style="left:130.24px;top:823.00px;width:1px;height:27px;background:rgba(255,255,255,0.09);"></div><div class="a" style="left:151.36px;top:823.00px;width:1px;height:27px;background:rgba(255,255,255,0.09);"></div><div class="a" style="left:172.48px;top:823.00px;width:1px;height:27px;background:rgba(255,255,255,0.09);"></div><div class="a" style="left:193.60px;top:823.00px;width:1px;height:27px;background:rgba(255,255,255,0.09);"></div><div class="a" style="left:214.72px;top:823.00px;width:1px;height:27px;background:rgba(255,255,255,0.09);"></div><div class="a" style="left:235.84px;top:823.00px;width:1px;height:27px;background:rgba(255,255,255,0.09);"></div><div class="ln" style="left:-3px;top:824.20px;">112</div><div class="cl" style="left:256.96px;top:824.20px;"><span class="b3">]</span>,</div><div class="a" style="left:88.00px;top:850.00px;width:22.02px;height:26px;background:#373937;"></div><div class="a" style="left:109.12px;top:850.00px;width:22.02px;height:26px;background:#2e393b;"></div><div class="a" style="left:130.24px;top:850.00px;width:22.02px;height:26px;background:#373044;"></div><div class="a" style="left:151.36px;top:850.00px;width:22.02px;height:26px;background:#2b3843;"></div><div class="a" style="left:172.48px;top:850.00px;width:22.02px;height:26px;background:#373937;"></div><div class="a" style="left:193.60px;top:850.00px;width:22.02px;height:26px;background:#2e393b;"></div><div class="a" style="left:214.72px;top:850.00px;width:22.02px;height:26px;background:#373044;"></div><div class="a" style="left:88.00px;top:850.00px;width:1px;height:26px;background:rgba(255,255,255,0.09);"></div><div class="a" style="left:109.12px;top:850.00px;width:1px;height:26px;background:rgba(255,255,255,0.09);"></div><div class="a" style="left:130.24px;top:850.00px;width:1px;height:26px;background:rgba(255,255,255,0.09);"></div><div class="a" style="left:151.36px;top:850.00px;width:1px;height:26px;background:rgba(255,255,255,0.09);"></div><div class="a" style="left:172.48px;top:850.00px;width:1px;height:26px;background:rgba(255,255,255,0.09);"></div><div class="a" style="left:193.60px;top:850.00px;width:1px;height:26px;background:rgba(255,255,255,0.09);"></div><div class="a" style="left:214.72px;top:850.00px;width:1px;height:26px;background:rgba(255,255,255,0.09);"></div><div class="ln" style="left:-3px;top:851.20px;">113</div><div class="cl" style="left:235.84px;top:851.20px;"><span class="b2">)</span>,<span class="c"> // Column</span></div><div class="a" style="left:88.00px;top:876.00px;width:22.02px;height:26px;background:#373937;"></div><div class="a" style="left:109.12px;top:876.00px;width:22.02px;height:26px;background:#2e393b;"></div><div class="a" style="left:130.24px;top:876.00px;width:22.02px;height:26px;background:#373044;"></div><div class="a" style="left:151.36px;top:876.00px;width:22.02px;height:26px;background:#2b3843;"></div><div class="a" style="left:172.48px;top:876.00px;width:22.02px;height:26px;background:#373937;"></div><div class="a" style="left:193.60px;top:876.00px;width:22.02px;height:26px;background:#2e393b;"></div><div class="a" style="left:88.00px;top:876.00px;width:1px;height:26px;background:rgba(255,255,255,0.09);"></div><div class="a" style="left:109.12px;top:876.00px;width:1px;height:26px;background:rgba(255,255,255,0.09);"></div><div class="a" style="left:130.24px;top:876.00px;width:1px;height:26px;background:rgba(255,255,255,0.09);"></div><div class="a" style="left:151.36px;top:876.00px;width:1px;height:26px;background:rgba(255,255,255,0.09);"></div><div class="a" style="left:172.48px;top:876.00px;width:1px;height:26px;background:rgba(255,255,255,0.09);"></div><div class="a" style="left:193.60px;top:876.00px;width:1px;height:26px;background:rgba(255,255,255,0.09);"></div><div class="ln" style="left:-3px;top:877.20px;">114</div><div class="cl" style="left:214.72px;top:877.20px;"><span class="b1">)</span>,<span class="c"> // Padding</span></div><div class="a" style="left:88px;top:31.19999999999999px;width:1px;height:900px;background:#44464f;"></div><div class="a" style="left:562.70px;top:718px;width:11.56px;height:26px;border:1px solid #7cc7dc;"></div></div><div class="a" style="left:557px;top:110px;width:1226px;height:45px;overflow:hidden;"><div class="a" style="left:0;top:0;width:1226px;height:31px;background:#282a36;box-shadow:0 2px 2px 0 #000;overflow:hidden;"><div class="ln" style="left:-3px;top:0.6px;">29</div><div class="a" style="left:161px;top:27px;width:14px;height:1px;background:#3fae5f;"></div><div class="a" style="left:338px;top:27px;width:2px;height:1px;background:#b3588c;"></div><div class="a" style="left:396px;top:27px;width:7px;height:1px;background:#6bb3c4;"></div><div class="cl" style="left:88px;top:0.6px;"><span class="k">class</span><span class="w"> </span><span class="t">_CalculadoraScreenState</span><span class="w"> </span><span class="k">extends</span><span class="w"> </span><span class="t">State</span><span class="w">&lt;</span><span class="t">CalculadoraScreen</span><span class="w">&gt; </span><span class="b1">{</span></div></div></div><div class="a" style="left:1776.5px;top:110px;width:6.5px;height:896px;background:linear-gradient(90deg,rgba(0,0,0,0),rgba(0,0,0,0.12) 50%,rgba(0,0,0,0.38));"></div><svg class="a" style="left:0;top:0" width="1916" height="1031" viewBox="0 0 1916 1031"><path d="M1791 110.9h6M1791 114.9h4M1800 116.9h5M1791 122.9h5M1812 122.9h7M1793 124.9h5M1815 124.9h5M1795 132.9h6M1823 134.9h1M1802 136.9h1M1822 138.9h1M1801 142.9h1M1803 142.9h5M1791 152.9h5M1815 152.9h7M1793 154.9h5M1818 154.9h5M1791 166.9h5M1821 166.9h7M1793 178.9h4M1797 182.9h2M1799 192.9h4M1804 192.9h2M1799 194.9h2M1801 198.9h4M1799 204.9h4M1804 204.9h2M1799 212.9h4M1804 212.9h2M1824 212.9h2M1801 214.9h5M1801 220.9h2M1801 222.9h2M1801 224.9h2M1801 226.9h2M1803 232.9h2M1799 244.9h4M1804 244.9h2M1799 246.9h5M1799 250.9h4M1799 252.9h2M1832 254.9h1M1801 258.9h4M1795 276.9h6M1801 278.9h1M1804 280.9h1M1809 282.9h1M1810 288.9h1M1816 290.9h1M1814 292.9h1M1816 292.9h5M1812 294.9h1M1814 298.9h1M1816 298.9h5M1840 298.9h1M1856 298.9h1M1880 298.9h1M1817 300.9h1M1817 302.9h1M1812 312.9h1M1814 312.9h5M1810 314.9h1M1815 316.9h1M1850 318.9h1M1850 326.9h1M1795 348.9h6M1804 350.9h1M1806 350.9h5M1843 350.9h1M1857 350.9h1M1802 352.9h1M1816 354.9h1M1807 356.9h1M1816 362.9h1M1818 362.9h5M1851 362.9h1M1870 362.9h1M1886 362.9h1M1816 364.9h1M1818 364.9h5M1854 364.9h1M1879 364.9h1M1816 366.9h1M1818 366.9h5M1851 366.9h1M1876 366.9h1M1795 380.9h6M1804 382.9h1M1806 382.9h5M1807 384.9h1M1804 386.9h1M1845 386.9h1M1811 388.9h1M1802 392.9h1M1820 392.9h1M1844 392.9h1M1863 392.9h1M1795 402.9h6M1804 404.9h1M1806 404.9h5M1841 404.9h1M1802 406.9h1M1816 408.9h1M1807 410.9h1M1801 412.9h5M1801 414.9h6M1808 416.9h1M1808 418.9h1M1808 420.9h1M1831 420.9h1M1809 422.9h1M1791 438.9h5M1804 438.9h7M1793 440.9h5M1793 442.9h5M1793 444.9h5M1793 446.9h5M1793 450.9h5M1795 452.9h8M1804 452.9h4M1795 454.9h8M1804 454.9h4M1795 456.9h8M1804 456.9h4M1795 458.9h4M1795 460.9h5M1795 470.9h6M1802 472.9h1M1809 474.9h1M1811 474.9h5M1802 476.9h1M1804 478.9h1M1805 480.9h1M1809 482.9h1M1806 484.9h1M1806 486.9h1M1831 486.9h1M1808 490.9h1M1804 492.9h1M1832 494.9h1M1803 496.9h1M1812 500.9h1M1832 500.9h1M1843 500.9h1M1867 500.9h1" stroke="#ff79c6" stroke-width="1.6" opacity="0.4" fill="none"/><path d="M1806 116.9h14M1797 122.9h14M1820 122.9h15M1799 124.9h14M1793 130.9h6M1806 130.9h12M1802 132.9h11M1804 136.9h9M1824 138.9h6M1809 142.9h17M1797 152.9h17M1823 152.9h14M1799 154.9h17M1793 160.9h5M1799 160.9h17M1829 166.9h5M1835 166.9h17M1793 168.9h6M1793 172.9h6M1810 178.9h6M1793 274.9h6M1806 274.9h12M1802 276.9h8M1803 278.9h8M1806 280.9h6M1803 286.9h8M1812 288.9h9M1818 290.9h9M1822 292.9h10M1814 294.9h4M1822 298.9h9M1858 298.9h10M1882 298.9h6M1819 302.9h12M1803 310.9h7M1820 312.9h10M1812 314.9h6M1793 346.9h6M1802 348.9h7M1812 350.9h10M1804 352.9h3M1818 354.9h17M1810 358.9h5M1810 360.9h5M1801 362.9h10M1824 362.9h4M1829 362.9h5M1853 362.9h6M1801 364.9h10M1824 364.9h4M1829 364.9h5M1856 364.9h6M1801 366.9h10M1824 366.9h4M1829 366.9h5M1853 366.9h6M1793 378.9h6M1809 378.9h8M1802 380.9h9M1812 382.9h10M1809 384.9h13M1814 386.9h6M1847 386.9h6M1813 388.9h12M1804 392.9h4M1830 392.9h6M1846 392.9h6M1793 400.9h6M1810 400.9h4M1815 400.9h6M1802 402.9h7M1812 404.9h10M1804 406.9h3M1818 408.9h17M1817 420.9h6M1833 420.9h6M1812 438.9h15M1799 440.9h6M1799 442.9h12M1799 444.9h5M1793 468.9h6M1806 468.9h12M1802 470.9h7M1817 474.9h12M1804 476.9h9M1811 482.9h13M1808 484.9h8M1817 486.9h6M1833 486.9h6M1810 490.9h9M1805 494.9h4M1810 494.9h5M1834 494.9h6M1805 496.9h4M1814 500.9h9M1854 500.9h6" stroke="#8be9fd" stroke-width="1.6" opacity="0.4" fill="none"/><path d="M1796 114.9h4M1793 116.9h6M1800 130.9h5M1814 136.9h4M1821 136.9h8M1818 160.9h11M1835 160.9h23M1798 178.9h11M1795 180.9h8M1821 196.9h9M1815 204.9h8M1818 206.9h8M1836 206.9h10M1824 214.9h8M1842 214.9h10M1822 230.9h8M1833 230.9h10M1816 232.9h8M1825 234.9h10M1820 246.9h8M1838 246.9h10M1825 248.9h8M1800 274.9h5M1803 284.9h12M1833 292.9h3M1831 312.9h3M1809 318.9h9M1809 320.9h9M1809 322.9h9M1809 324.9h9M1809 326.9h9M1800 346.9h12M1823 350.9h9M1801 358.9h8M1801 360.9h8M1800 378.9h8M1823 382.9h3M1828 386.9h11M1826 388.9h8M1800 400.9h9M1823 404.9h9M1816 410.9h3M1823 412.9h8M1808 414.9h6M1816 418.9h11M1802 426.9h6M1799 450.9h6M1800 468.9h5" stroke="#50fa7b" stroke-width="1.6" opacity="0.4" fill="none"/><path d="M1797 134.9h26M1797 136.9h5M1799 138.9h23M1797 142.9h4M1797 278.9h4M1799 280.9h5M1801 282.9h8M1805 288.9h5M1807 290.9h9M1807 292.9h7M1807 294.9h5M1809 298.9h5M1832 298.9h8M1846 298.9h10M1875 298.9h5M1809 300.9h8M1809 302.9h8M1805 312.9h7M1805 314.9h5M1807 316.9h8M1843 318.9h7M1844 326.9h6M1797 350.9h7M1833 350.9h10M1849 350.9h8M1797 352.9h5M1799 354.9h17M1799 356.9h8M1812 362.9h4M1846 362.9h5M1866 362.9h4M1877 362.9h9M1812 364.9h4M1849 364.9h5M1870 364.9h9M1812 366.9h4M1846 366.9h5M1867 366.9h9M1797 382.9h7M1797 384.9h10M1799 386.9h5M1799 388.9h12M1797 392.9h5M1815 392.9h5M1859 392.9h4M1797 404.9h7M1833 404.9h8M1797 406.9h5M1799 408.9h17M1799 410.9h8M1803 416.9h5M1803 418.9h5M1803 420.9h5M1803 422.9h6M1797 472.9h5M1797 474.9h12M1797 476.9h5M1799 478.9h5M1799 480.9h6M1799 482.9h10M1801 484.9h5M1801 486.9h5M1799 490.9h9M1799 492.9h5M1827 494.9h5M1807 500.9h5M1824 500.9h8M1838 500.9h5" stroke="#ffb86c" stroke-width="1.6" opacity="0.4" fill="none"/><path d="M1825 134.9h5M1812 174.9h4M1811 186.9h4M1811 188.9h4M1813 190.9h4M1821 194.9h1M1831 196.9h1M1852 196.9h1M1813 210.9h4M1841 212.9h4M1820 216.9h1M1813 238.9h4M1815 240.9h4M1820 248.9h3M1815 256.9h5M1837 292.9h2M1842 298.9h2M1819 300.9h1M1835 312.9h4M1852 318.9h4M1852 326.9h4M1845 350.9h2M1859 350.9h1M1822 358.9h5M1836 360.9h4M1872 362.9h2M1827 382.9h1M1840 386.9h3M1835 388.9h1M1865 392.9h2M1847 400.9h5M1868 400.9h5M1843 404.9h1M1809 458.9h5M1806 478.9h2M1807 480.9h2M1834 500.9h2" stroke="#bd93f9" stroke-width="1.6" opacity="0.4" fill="none"/><path d="M1798 110.9h31M1811 168.9h3M1810 182.9h4M1810 184.9h3M1817 192.9h5M1812 200.9h3M1808 204.9h6M1847 206.9h3M1852 206.9h3M1817 212.9h3M1853 214.9h3M1858 214.9h3M1818 220.9h3M1818 222.9h3M1818 224.9h3M1818 226.9h3M1844 230.9h3M1849 230.9h3M1825 232.9h4M1836 234.9h4M1842 234.9h2M1817 244.9h3M1849 246.9h3M1854 246.9h3M1821 254.9h3M1827 254.9h4M1820 318.9h4M1826 318.9h4M1832 318.9h3M1837 318.9h3M1820 320.9h3M1825 320.9h3M1830 320.9h3M1835 320.9h3M1820 322.9h3M1825 322.9h3M1830 322.9h3M1835 322.9h3M1820 324.9h3M1825 324.9h3M1830 324.9h3M1835 324.9h3M1820 326.9h6M1828 326.9h3M1833 326.9h3M1838 326.9h3M1814 412.9h8M1820 422.9h3M1815 492.9h6" stroke="#f1fa8c" stroke-width="1.6" opacity="0.4" fill="none"/><path d="M1829 110.9h1M1800 114.9h1M1801 114.9h1M1803 114.9h1M1799 116.9h1M1820 116.9h1M1821 116.9h1M1822 116.9h1M1823 116.9h1M1791 118.9h1M1836 122.9h1M1813 124.9h1M1814 124.9h1M1820 124.9h1M1821 124.9h3M1824 124.9h1M1825 124.9h1M1826 124.9h1M1793 128.9h1M1794 128.9h8M1805 130.9h1M1819 130.9h7M1826 130.9h1M1828 130.9h1M1813 132.9h1M1830 134.9h1M1813 136.9h1M1818 136.9h1M1819 136.9h1M1820 136.9h1M1829 136.9h1M1830 138.9h1M1831 138.9h5M1836 138.9h1M1797 140.9h1M1798 140.9h1M1826 142.9h1M1827 142.9h1M1828 142.9h1M1795 144.9h1M1796 144.9h1M1793 146.9h1M1791 148.9h1M1838 152.9h1M1816 154.9h1M1817 154.9h1M1823 154.9h1M1824 154.9h3M1827 154.9h1M1828 154.9h1M1829 154.9h1M1793 158.9h1M1794 158.9h8M1798 160.9h1M1816 160.9h1M1829 160.9h1M1830 160.9h1M1832 160.9h1M1833 160.9h1M1858 160.9h1M1859 160.9h1M1860 160.9h1M1791 162.9h1M1797 166.9h23M1834 166.9h1M1852 166.9h1M1854 166.9h1M1800 168.9h8M1809 168.9h1M1814 168.9h1M1793 170.9h6M1799 170.9h1M1801 170.9h9M1810 170.9h1M1799 172.9h1M1801 172.9h9M1810 172.9h1M1793 174.9h4M1798 174.9h11M1810 174.9h1M1816 174.9h1M1809 178.9h1M1817 178.9h5M1822 178.9h1M1824 178.9h1M1803 180.9h1M1804 180.9h1M1805 180.9h1M1807 180.9h1M1800 182.9h1M1801 182.9h5M1807 182.9h1M1808 182.9h1M1814 182.9h1M1816 182.9h1M1799 184.9h8M1808 184.9h1M1813 184.9h1M1799 186.9h9M1809 186.9h1M1815 186.9h1M1799 188.9h9M1809 188.9h1M1815 188.9h1M1799 190.9h11M1811 190.9h1M1817 190.9h1M1797 192.9h1M1807 192.9h1M1808 192.9h5M1814 192.9h1M1815 192.9h1M1822 192.9h1M1824 192.9h1M1802 194.9h1M1803 194.9h8M1811 194.9h1M1812 194.9h6M1819 194.9h1M1822 194.9h1M1824 194.9h1M1801 196.9h8M1810 196.9h1M1812 196.9h8M1820 196.9h1M1830 196.9h1M1832 196.9h1M1834 196.9h8M1842 196.9h1M1843 196.9h6M1850 196.9h1M1853 196.9h1M1854 196.9h1M1799 198.9h1M1806 198.9h1M1801 200.9h8M1810 200.9h1M1815 200.9h1M1799 202.9h1M1797 204.9h1M1807 204.9h1M1814 204.9h1M1823 204.9h1M1824 204.9h5M1829 204.9h1M1830 204.9h1M1832 204.9h1M1799 206.9h9M1809 206.9h1M1811 206.9h6M1817 206.9h1M1826 206.9h1M1827 206.9h8M1835 206.9h1M1846 206.9h1M1850 206.9h1M1855 206.9h1M1856 206.9h1M1857 206.9h1M1799 208.9h9M1809 208.9h1M1811 208.9h5M1816 208.9h1M1799 210.9h11M1811 210.9h1M1817 210.9h1M1797 212.9h1M1807 212.9h1M1808 212.9h5M1814 212.9h1M1815 212.9h1M1820 212.9h1M1822 212.9h1M1827 212.9h1M1828 212.9h9M1838 212.9h1M1839 212.9h1M1845 212.9h1M1847 212.9h1M1807 214.9h7M1815 214.9h1M1817 214.9h6M1823 214.9h1M1832 214.9h1M1833 214.9h8M1841 214.9h1M1852 214.9h1M1856 214.9h1M1861 214.9h1M1862 214.9h1M1863 214.9h1M1801 216.9h6M1808 216.9h9M1818 216.9h1M1821 216.9h1M1804 220.9h1M1805 220.9h9M1815 220.9h1M1816 220.9h1M1821 220.9h1M1823 220.9h9M1833 220.9h1M1835 220.9h9M1844 220.9h1M1846 220.9h1M1848 220.9h7M1855 220.9h1M1856 220.9h1M1804 222.9h1M1805 222.9h9M1815 222.9h1M1816 222.9h1M1821 222.9h1M1823 222.9h9M1833 222.9h1M1835 222.9h9M1844 222.9h1M1846 222.9h1M1848 222.9h7M1855 222.9h1M1856 222.9h1M1804 224.9h1M1805 224.9h9M1815 224.9h1M1816 224.9h1M1821 224.9h1M1823 224.9h9M1833 224.9h1M1835 224.9h9M1844 224.9h1M1846 224.9h1M1848 224.9h7M1855 224.9h1M1856 224.9h1M1804 226.9h1M1805 226.9h9M1815 226.9h1M1816 226.9h1M1821 226.9h1M1823 226.9h9M1833 226.9h1M1835 226.9h9M1844 226.9h1M1846 226.9h1M1848 226.9h7M1855 226.9h1M1856 226.9h1M1801 230.9h8M1810 230.9h1M1812 230.9h9M1821 230.9h1M1830 230.9h1M1831 230.9h1M1832 230.9h1M1843 230.9h1M1847 230.9h1M1852 230.9h1M1853 230.9h1M1806 232.9h1M1807 232.9h8M1815 232.9h1M1824 232.9h1M1829 232.9h1M1830 232.9h1M1832 232.9h1M1805 234.9h8M1814 234.9h1M1816 234.9h8M1824 234.9h1M1835 234.9h1M1840 234.9h1M1844 234.9h1M1845 234.9h1M1801 238.9h9M1811 238.9h1M1817 238.9h1M1801 240.9h11M1813 240.9h1M1819 240.9h1M1797 244.9h1M1807 244.9h1M1808 244.9h5M1814 244.9h1M1815 244.9h1M1820 244.9h1M1822 244.9h1M1805 246.9h5M1811 246.9h1M1813 246.9h6M1819 246.9h1M1828 246.9h1M1829 246.9h8M1837 246.9h1M1848 246.9h1M1852 246.9h1M1857 246.9h1M1858 246.9h1M1859 246.9h1M1799 248.9h8M1808 248.9h1M1810 248.9h1M1811 248.9h5M1816 248.9h1M1818 248.9h1M1823 248.9h1M1824 248.9h1M1833 248.9h1M1834 248.9h1M1835 248.9h1M1797 250.9h1M1804 250.9h1M1802 252.9h1M1803 252.9h11M1814 252.9h1M1816 252.9h1M1801 254.9h8M1810 254.9h1M1812 254.9h5M1818 254.9h1M1819 254.9h1M1825 254.9h1M1834 254.9h5M1839 254.9h1M1801 256.9h11M1813 256.9h1M1820 256.9h1M1799 258.9h1M1806 258.9h1M1801 260.9h8M1810 260.9h1M1812 260.9h8M1821 260.9h1M1823 260.9h5M1828 260.9h1M1799 262.9h1M1797 264.9h1M1795 266.9h1M1796 266.9h1M1797 266.9h1M1793 268.9h1M1793 272.9h1M1794 272.9h8M1805 274.9h1M1819 274.9h7M1826 274.9h1M1828 274.9h1M1810 276.9h1M1811 278.9h1M1812 280.9h1M1811 282.9h1M1815 284.9h1M1816 284.9h1M1817 284.9h1M1811 286.9h1M1821 288.9h1M1827 290.9h1M1828 290.9h11M1839 290.9h1M1832 292.9h1M1836 292.9h1M1839 292.9h1M1840 292.9h1M1818 294.9h1M1809 296.9h8M1817 296.9h1M1831 298.9h1M1844 298.9h1M1868 298.9h1M1869 298.9h4M1873 298.9h1M1888 298.9h1M1889 298.9h5M1894 298.9h1M1895 298.9h1M1820 300.9h1M1831 302.9h1M1832 302.9h8M1840 302.9h1M1807 304.9h1M1808 304.9h1M1805 306.9h1M1806 306.9h1M1803 308.9h1M1804 308.9h1M1810 310.9h1M1830 312.9h1M1834 312.9h1M1839 312.9h1M1840 312.9h1M1818 314.9h1M1817 316.9h1M1818 318.9h1M1819 318.9h1M1824 318.9h1M1830 318.9h1M1835 318.9h1M1840 318.9h1M1841 318.9h1M1856 318.9h1M1857 318.9h1M1818 320.9h1M1819 320.9h1M1823 320.9h1M1828 320.9h1M1833 320.9h1M1838 320.9h1M1839 320.9h1M1840 320.9h1M1818 322.9h1M1819 322.9h1M1823 322.9h1M1828 322.9h1M1833 322.9h1M1838 322.9h1M1839 322.9h1M1840 322.9h1M1818 324.9h1M1819 324.9h1M1823 324.9h1M1828 324.9h1M1833 324.9h1M1838 324.9h1M1839 324.9h1M1840 324.9h1M1818 326.9h1M1819 326.9h1M1826 326.9h1M1831 326.9h1M1836 326.9h1M1841 326.9h1M1842 326.9h1M1856 326.9h1M1857 326.9h1M1807 328.9h1M1808 328.9h1M1805 330.9h1M1806 330.9h1M1803 332.9h1M1804 332.9h1M1801 334.9h1M1802 334.9h1M1799 336.9h1M1800 336.9h1M1797 338.9h1M1798 338.9h1M1795 340.9h1M1796 340.9h1M1793 342.9h1M1812 346.9h1M1813 346.9h1M1815 346.9h1M1809 348.9h1M1822 350.9h1M1832 350.9h1M1847 350.9h1M1860 350.9h1M1861 350.9h1M1807 352.9h1M1835 354.9h1M1836 354.9h12M1848 354.9h1M1809 356.9h1M1809 358.9h1M1815 358.9h1M1816 358.9h4M1820 358.9h1M1827 358.9h1M1828 358.9h1M1809 360.9h1M1815 360.9h1M1816 360.9h18M1834 360.9h1M1840 360.9h1M1841 360.9h1M1811 362.9h1M1828 362.9h1M1834 362.9h1M1835 362.9h9M1844 362.9h1M1859 362.9h1M1860 362.9h4M1864 362.9h1M1874 362.9h1M1875 362.9h1M1888 362.9h1M1889 362.9h1M1891 362.9h1M1892 362.9h1M1893 362.9h1M1894 362.9h1M1811 364.9h1M1828 364.9h1M1834 364.9h1M1835 364.9h12M1847 364.9h1M1862 364.9h1M1863 364.9h4M1867 364.9h1M1868 364.9h1M1881 364.9h1M1882 364.9h1M1884 364.9h1M1885 364.9h1M1886 364.9h1M1887 364.9h1M1811 366.9h1M1828 366.9h1M1834 366.9h1M1835 366.9h9M1844 366.9h1M1859 366.9h1M1860 366.9h4M1864 366.9h1M1865 366.9h1M1878 366.9h1M1879 366.9h1M1881 366.9h1M1882 366.9h1M1883 366.9h1M1884 366.9h1M1799 368.9h1M1800 368.9h1M1797 370.9h1M1798 370.9h1M1795 372.9h1M1796 372.9h1M1793 374.9h1M1808 378.9h1M1818 378.9h4M1822 378.9h1M1824 378.9h4M1829 378.9h5M1834 378.9h1M1836 378.9h1M1811 380.9h1M1822 382.9h1M1826 382.9h1M1828 382.9h1M1829 382.9h1M1822 384.9h1M1806 386.9h5M1812 386.9h1M1820 386.9h1M1821 386.9h6M1827 386.9h1M1839 386.9h1M1843 386.9h1M1853 386.9h1M1854 386.9h11M1865 386.9h1M1825 388.9h1M1834 388.9h1M1836 388.9h1M1837 388.9h1M1797 390.9h1M1798 390.9h1M1808 392.9h1M1809 392.9h4M1813 392.9h1M1822 392.9h5M1828 392.9h1M1836 392.9h1M1837 392.9h6M1852 392.9h1M1853 392.9h4M1857 392.9h1M1867 392.9h1M1868 392.9h1M1795 394.9h1M1796 394.9h1M1793 396.9h1M1809 400.9h1M1814 400.9h1M1821 400.9h1M1823 400.9h6M1829 400.9h1M1831 400.9h1M1832 400.9h4M1837 400.9h7M1845 400.9h1M1852 400.9h1M1854 400.9h4M1859 400.9h6M1866 400.9h1M1873 400.9h1M1874 400.9h1M1876 400.9h1M1809 402.9h1M1822 404.9h1M1832 404.9h1M1844 404.9h1M1845 404.9h1M1807 406.9h1M1835 408.9h1M1836 408.9h11M1847 408.9h1M1809 410.9h6M1815 410.9h1M1819 410.9h1M1820 410.9h1M1821 410.9h5M1826 410.9h1M1828 410.9h1M1807 412.9h4M1812 412.9h1M1822 412.9h1M1831 412.9h1M1832 412.9h5M1837 412.9h1M1838 412.9h1M1814 414.9h1M1810 416.9h5M1815 416.9h1M1810 418.9h1M1811 418.9h1M1813 418.9h1M1814 418.9h1M1827 418.9h1M1828 418.9h5M1833 418.9h1M1834 418.9h1M1810 420.9h4M1815 420.9h1M1823 420.9h1M1824 420.9h6M1839 420.9h1M1840 420.9h5M1845 420.9h1M1811 422.9h5M1817 422.9h1M1818 422.9h1M1823 422.9h1M1801 424.9h1M1802 424.9h1M1799 426.9h1M1800 426.9h1M1801 426.9h1M1808 426.9h1M1809 426.9h1M1810 426.9h1M1797 428.9h1M1798 428.9h1M1795 430.9h1M1796 430.9h1M1793 432.9h1M1791 434.9h1M1797 438.9h6M1828 438.9h1M1806 440.9h5M1811 440.9h1M1812 442.9h5M1817 442.9h1M1805 444.9h5M1810 444.9h1M1799 446.9h4M1804 446.9h6M1810 446.9h1M1805 450.9h1M1806 450.9h1M1808 452.9h1M1809 452.9h5M1814 452.9h1M1808 454.9h1M1809 454.9h5M1814 454.9h1M1808 456.9h1M1809 456.9h5M1814 456.9h1M1799 458.9h1M1800 458.9h6M1807 458.9h1M1814 458.9h1M1800 460.9h1M1801 460.9h3M1804 460.9h1M1793 462.9h1M1794 462.9h1M1795 462.9h1M1793 466.9h1M1794 466.9h8M1805 468.9h1M1819 468.9h7M1826 468.9h1M1828 468.9h1M1809 470.9h1M1804 472.9h5M1809 472.9h1M1829 474.9h1M1830 474.9h1M1831 474.9h1M1813 476.9h1M1808 478.9h1M1809 480.9h1M1824 482.9h1M1816 484.9h1M1817 484.9h6M1823 484.9h1M1808 486.9h6M1815 486.9h1M1823 486.9h1M1824 486.9h6M1839 486.9h1M1840 486.9h11M1851 486.9h1M1799 488.9h1M1800 488.9h1M1819 490.9h1M1820 490.9h6M1826 490.9h1M1806 492.9h5M1812 492.9h1M1813 492.9h1M1803 494.9h1M1809 494.9h1M1815 494.9h1M1816 494.9h9M1825 494.9h1M1840 494.9h1M1841 494.9h6M1847 494.9h1M1809 496.9h1M1807 498.9h5M1812 498.9h1M1823 500.9h1M1836 500.9h1M1845 500.9h6M1852 500.9h1M1860 500.9h1M1861 500.9h5M1869 500.9h5M1874 500.9h1M1875 500.9h1M1805 502.9h1M1806 502.9h1M1797 504.9h1M1798 504.9h1M1795 506.9h1M1796 506.9h1M1793 508.9h1M1791 510.9h1" stroke="#c9c9c6" stroke-width="1.6" opacity="0.4" fill="none"/><rect x="1791" y="367.6" width="109" height="2" fill="#3f86e8" opacity="0.62"/></svg><div class="a" style="left:1901px;top:110px;width:1px;height:896px;background:#1f2029;"></div><div class="a" style="left:1902px;top:153px;width:14px;height:2px;background:#8a8c94;"></div><div class="a" style="left:1912px;top:597px;width:4px;height:6px;background:#5e8f9e;"></div>
</body></html>
